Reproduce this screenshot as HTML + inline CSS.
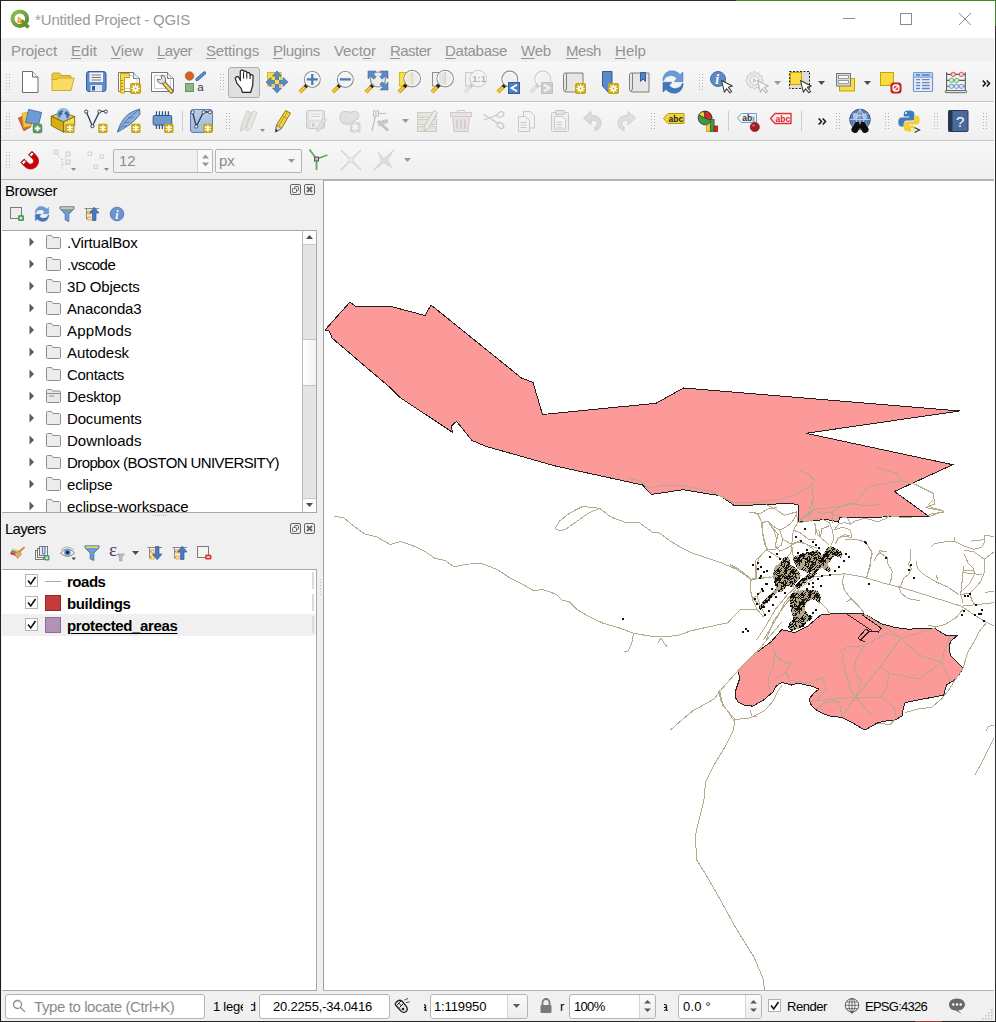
<!DOCTYPE html>
<html lang="en"><head><meta charset="utf-8"><title>*Untitled Project - QGIS</title>
<style>
*{box-sizing:border-box;margin:0;padding:0}
html,body{width:996px;height:1022px;overflow:hidden;background:#f0f0f0}
body{position:relative;font-family:"Liberation Sans",sans-serif;font-size:15px;color:#000}
.a{position:absolute}
.t{position:absolute;white-space:nowrap;line-height:22px;height:22px}
.ic{position:absolute;width:24px;height:24px;overflow:visible}
.ic16{position:absolute;width:16px;height:16px;overflow:visible}
.hl{position:absolute;height:1px;left:1px;right:2px}
.grip{position:absolute;width:5px;height:17px;background-image:linear-gradient(90deg,#b0b0b0 1px,transparent 1px);background-size:3px 3px;-webkit-mask-image:linear-gradient(#000 1px,transparent 1px);-webkit-mask-size:3px 3px;mask-image:linear-gradient(#000 1px,transparent 1px);mask-size:3px 3px}
u{text-decoration-thickness:1px;text-underline-offset:2px}
</style></head>
<body>
<div class="a" style="left:0;top:0;width:996px;height:38px;background:#fff"></div>
<div class="a" style="left:0;top:0;width:736px;height:1px;background:#2b2b2b"></div>
<div class="a" style="left:736px;top:0;width:260px;height:1px;background:#3c8c1c"></div>
<div class="t ttl" style="left:35px;top:9px;color:#999;letter-spacing:-0.141px">*Untitled Project - QGIS</div>
<svg class="a" style="left:9px;top:8px" width="22" height="22" viewBox="0 0 22 22"><defs><linearGradient id="qg" x1="0" y1="0" x2="1" y2="1"><stop offset="0" stop-color="#93c04f"/><stop offset="1" stop-color="#4e8a2c"/></linearGradient></defs><circle cx="10.800" cy="10.700" r="7.300" fill="#fff" stroke="url(#qg)" stroke-width="4"/><path d="M12.500 12.500l7 7" stroke="#5a9632" stroke-width="3.800"/><path d="M9.300 9.200l4.200 3.300l-2 0.300l1.200 2l-1.200 0.700l-1.200-2.100l-1.300 1.300z" fill="#f4d93a" stroke="#ee7913" stroke-width="0.900"/></svg>
<svg class="a" style="left:830px;top:1px" width="165" height="37" viewBox="0 0 165 37" fill="none" stroke="#8a8a8a" stroke-width="1"><path d="M12.5 17.5h12" shape-rendering="crispEdges"/><rect x="70.5" y="12.5" width="11" height="11" shape-rendering="crispEdges"/><path d="M129 12l12 12M141 12l-12 12"/></svg>
<div class="a" style="left:1px;top:38px;width:994px;height:24px;background:#f0f0f0"></div>
<div class="t " style="left:11px;top:40px;color:#939393;letter-spacing:-0.098px">Pro<u>j</u>ect</div>
<div class="t " style="left:71px;top:40px;color:#939393;letter-spacing:0.035px"><u>E</u>dit</div>
<div class="t " style="left:111px;top:40px;color:#939393;letter-spacing:-0.062px"><u>V</u>iew</div>
<div class="t " style="left:157px;top:40px;color:#939393;letter-spacing:-0.506px"><u>L</u>ayer</div>
<div class="t " style="left:206px;top:40px;color:#939393;letter-spacing:-0.15px"><u>S</u>ettings</div>
<div class="t " style="left:273px;top:40px;color:#939393;letter-spacing:-0.315px"><u>P</u>lugins</div>
<div class="t " style="left:334px;top:40px;color:#939393;letter-spacing:-0.089px">Vect<u>o</u>r</div>
<div class="t " style="left:390px;top:40px;color:#939393;letter-spacing:-0.531px"><u>R</u>aster</div>
<div class="t " style="left:445px;top:40px;color:#939393;letter-spacing:-0.277px"><u>D</u>atabase</div>
<div class="t " style="left:521px;top:40px;color:#939393;letter-spacing:-0.193px"><u>W</u>eb</div>
<div class="t " style="left:566px;top:40px;color:#939393;letter-spacing:-0.422px"><u>M</u>esh</div>
<div class="t " style="left:615px;top:40px;color:#939393;letter-spacing:0.035px"><u>H</u>elp</div>
<div class="hl" style="top:62px;background:#fafafa"></div>
<div class="a" style="left:1px;top:63px;width:993px;height:39px;background:linear-gradient(#f7f7f7,#efefef)"></div>
<div class="a" style="left:1px;top:102px;width:993px;height:39px;background:linear-gradient(#f7f7f7,#efefef)"></div>
<div class="a" style="left:1px;top:141px;width:993px;height:39px;background:linear-gradient(#f7f7f7,#efefef)"></div>
<div class="hl" style="top:101px;background:#c3c3c3"></div>
<div class="hl" style="top:102px;background:#fbfbfb"></div>
<div class="hl" style="top:140px;background:#c3c3c3"></div>
<div class="hl" style="top:141px;background:#fbfbfb"></div>
<div class="hl" style="top:179px;background:#b4b4b4"></div>
<div class="a" style="left:994px;top:1px;width:1px;height:1020px;background:#fff"></div>
<div class="a" style="left:995px;top:0;width:1px;height:1022px;background:#2e2e2e"></div>
<div class="a" style="left:995px;top:0;width:1px;height:26px;background:#3c8c1c"></div>
<div class="a" style="left:0;top:0;width:1px;height:1022px;background:#1e1e1e"></div>
<div class="a" style="left:0;top:1021px;width:996px;height:1px;background:#262626"></div>
<div class="a" style="left:915px;top:1021px;width:27px;height:1px;background:#a03c3c"></div>
<div class="a" style="left:323px;top:180px;width:671px;height:811px;background:#fff;border-left:1px solid #a0a0a0;border-top:1px solid #b4b4b4;border-bottom:1px solid #b4b4b4"></div>
<div class="t " style="left:5px;top:180px;letter-spacing:-0.431px">Browser</div>
<svg class="a" style="left:290px;top:184px" width="26" height="11" viewBox="0 0 26 11" fill="none" stroke="#6a6560"><rect x="0.500" y="0.500" width="10" height="10" rx="1.500"/><rect x="4.500" y="2.500" width="4" height="4" rx="0.800"/><rect x="2.500" y="4.500" width="4" height="4" rx="0.800" fill="#f0f0f0"/><rect x="14.500" y="0.500" width="10" height="10" rx="1.500"/><path d="M17 3l5 5M22 3l-5 5" stroke-width="1.800"/></svg>
<div class="a" style="left:2px;top:230px;width:315px;height:283px;background:#fff;border:1px solid #a8a8a8;border-left:none"></div>
<div class="a" style="left:2px;top:231px;width:300px;height:281px;overflow:hidden">
<svg class="a" style="left:27px;top:6px" width="6" height="10" viewBox="0 0 6 10"><path d="M0.5 0.5L5 5L0.5 9.5z" fill="#5a5a5a"/></svg>
<svg class="a" style="left:44px;top:4px" width="15" height="14" viewBox="0 0 15 14"><path d="M0.500 1.500q0-1 1-1h4l1.500 2h6.500q1 0 1 1v9q0 1-1 1h-12q-1 0-1-1z" fill="#ececec" stroke="#8e8e8e"/></svg>
<div class="t " style="left:65px;top:1px;letter-spacing:-0.161px">.VirtualBox</div>
<svg class="a" style="left:27px;top:28px" width="6" height="10" viewBox="0 0 6 10"><path d="M0.5 0.5L5 5L0.5 9.5z" fill="#5a5a5a"/></svg>
<svg class="a" style="left:44px;top:26px" width="15" height="14" viewBox="0 0 15 14"><path d="M0.500 1.500q0-1 1-1h4l1.500 2h6.500q1 0 1 1v9q0 1-1 1h-12q-1 0-1-1z" fill="#ececec" stroke="#8e8e8e"/></svg>
<div class="t " style="left:65px;top:23px;letter-spacing:-0.486px">.vscode</div>
<svg class="a" style="left:27px;top:50px" width="6" height="10" viewBox="0 0 6 10"><path d="M0.5 0.5L5 5L0.5 9.5z" fill="#5a5a5a"/></svg>
<svg class="a" style="left:44px;top:48px" width="15" height="14" viewBox="0 0 15 14"><path d="M0.500 1.500q0-1 1-1h4l1.500 2h6.500q1 0 1 1v9q0 1-1 1h-12q-1 0-1-1z" fill="#ececec" stroke="#8e8e8e"/></svg>
<div class="t " style="left:65px;top:45px;letter-spacing:-0.17px">3D Objects</div>
<svg class="a" style="left:27px;top:72px" width="6" height="10" viewBox="0 0 6 10"><path d="M0.5 0.5L5 5L0.5 9.5z" fill="#5a5a5a"/></svg>
<svg class="a" style="left:44px;top:70px" width="15" height="14" viewBox="0 0 15 14"><path d="M0.500 1.500q0-1 1-1h4l1.500 2h6.500q1 0 1 1v9q0 1-1 1h-12q-1 0-1-1z" fill="#ececec" stroke="#8e8e8e"/></svg>
<div class="t " style="left:65px;top:67px;letter-spacing:-0.156px">Anaconda3</div>
<svg class="a" style="left:27px;top:94px" width="6" height="10" viewBox="0 0 6 10"><path d="M0.5 0.5L5 5L0.5 9.5z" fill="#5a5a5a"/></svg>
<svg class="a" style="left:44px;top:92px" width="15" height="14" viewBox="0 0 15 14"><path d="M0.500 1.500q0-1 1-1h4l1.500 2h6.500q1 0 1 1v9q0 1-1 1h-12q-1 0-1-1z" fill="#ececec" stroke="#8e8e8e"/></svg>
<div class="t " style="left:65px;top:89px;letter-spacing:0.175px">AppMods</div>
<svg class="a" style="left:27px;top:116px" width="6" height="10" viewBox="0 0 6 10"><path d="M0.5 0.5L5 5L0.5 9.5z" fill="#5a5a5a"/></svg>
<svg class="a" style="left:44px;top:114px" width="15" height="14" viewBox="0 0 15 14"><path d="M0.500 1.500q0-1 1-1h4l1.500 2h6.500q1 0 1 1v9q0 1-1 1h-12q-1 0-1-1z" fill="#ececec" stroke="#8e8e8e"/></svg>
<div class="t " style="left:65px;top:111px;letter-spacing:-0.068px">Autodesk</div>
<svg class="a" style="left:27px;top:138px" width="6" height="10" viewBox="0 0 6 10"><path d="M0.5 0.5L5 5L0.5 9.5z" fill="#5a5a5a"/></svg>
<svg class="a" style="left:44px;top:136px" width="15" height="14" viewBox="0 0 15 14"><path d="M0.500 1.500q0-1 1-1h4l1.500 2h6.500q1 0 1 1v9q0 1-1 1h-12q-1 0-1-1z" fill="#ececec" stroke="#8e8e8e"/></svg>
<div class="t " style="left:65px;top:133px;letter-spacing:-0.275px">Contacts</div>
<svg class="a" style="left:27px;top:160px" width="6" height="10" viewBox="0 0 6 10"><path d="M0.5 0.5L5 5L0.5 9.5z" fill="#5a5a5a"/></svg>
<svg class="a" style="left:44px;top:158px" width="15" height="14" viewBox="0 0 15 14"><path d="M0.5 1.5q0-1 1-1h4l1 1.5h7q1 0 1 1v9.500q0 1-1 1h-12q-1 0-1-1z" fill="#e9e9e9" stroke="#8e8e8e"/><path d="M0.5 4.500h14M3 7h5" stroke="#8e8e8e" fill="none"/></svg>
<div class="t " style="left:65px;top:155px;letter-spacing:-0.147px">Desktop</div>
<svg class="a" style="left:27px;top:182px" width="6" height="10" viewBox="0 0 6 10"><path d="M0.5 0.5L5 5L0.5 9.5z" fill="#5a5a5a"/></svg>
<svg class="a" style="left:44px;top:180px" width="15" height="14" viewBox="0 0 15 14"><path d="M0.500 1.500q0-1 1-1h4l1.500 2h6.500q1 0 1 1v9q0 1-1 1h-12q-1 0-1-1z" fill="#ececec" stroke="#8e8e8e"/></svg>
<div class="t " style="left:65px;top:177px;letter-spacing:-0.153px">Documents</div>
<svg class="a" style="left:27px;top:204px" width="6" height="10" viewBox="0 0 6 10"><path d="M0.5 0.5L5 5L0.5 9.5z" fill="#5a5a5a"/></svg>
<svg class="a" style="left:44px;top:202px" width="15" height="14" viewBox="0 0 15 14"><path d="M0.500 1.500q0-1 1-1h4l1.500 2h6.500q1 0 1 1v9q0 1-1 1h-12q-1 0-1-1z" fill="#ececec" stroke="#8e8e8e"/></svg>
<div class="t " style="left:65px;top:199px;letter-spacing:0.031px">Downloads</div>
<svg class="a" style="left:27px;top:226px" width="6" height="10" viewBox="0 0 6 10"><path d="M0.5 0.5L5 5L0.5 9.5z" fill="#5a5a5a"/></svg>
<svg class="a" style="left:44px;top:224px" width="15" height="14" viewBox="0 0 15 14"><path d="M0.500 1.500q0-1 1-1h4l1.500 2h6.500q1 0 1 1v9q0 1-1 1h-12q-1 0-1-1z" fill="#ececec" stroke="#8e8e8e"/></svg>
<div class="t " style="left:65px;top:221px;letter-spacing:-0.597px">Dropbox (BOSTON UNIVERSITY)</div>
<svg class="a" style="left:27px;top:248px" width="6" height="10" viewBox="0 0 6 10"><path d="M0.5 0.5L5 5L0.5 9.5z" fill="#5a5a5a"/></svg>
<svg class="a" style="left:44px;top:246px" width="15" height="14" viewBox="0 0 15 14"><path d="M0.500 1.500q0-1 1-1h4l1.500 2h6.500q1 0 1 1v9q0 1-1 1h-12q-1 0-1-1z" fill="#ececec" stroke="#8e8e8e"/></svg>
<div class="t " style="left:65px;top:243px;letter-spacing:-0.186px">eclipse</div>
<svg class="a" style="left:27px;top:270px" width="6" height="10" viewBox="0 0 6 10"><path d="M0.5 0.5L5 5L0.5 9.5z" fill="#5a5a5a"/></svg>
<svg class="a" style="left:44px;top:268px" width="15" height="14" viewBox="0 0 15 14"><path d="M0.500 1.500q0-1 1-1h4l1.500 2h6.500q1 0 1 1v9q0 1-1 1h-12q-1 0-1-1z" fill="#ececec" stroke="#8e8e8e"/></svg>
<div class="t " style="left:65px;top:265px;letter-spacing:-0.105px">eclipse-workspace</div>
</div>
<div class="a" style="left:302px;top:231px;width:14px;height:281px;background:#e4e4e4;border-left:1px solid #b9b9b9"></div>
<div class="a" style="left:303px;top:231px;width:13px;height:14px;background:#fdfdfd;border-bottom:1px solid #c8c8c8"></div>
<div class="a" style="left:303px;top:498px;width:13px;height:14px;background:#fdfdfd;border-top:1px solid #c8c8c8"></div>
<div class="a" style="left:303px;top:339px;width:13px;height:47px;background:linear-gradient(90deg,#fff,#f4f4f4);border-top:1px solid #c4c4c4;border-bottom:1px solid #c4c4c4"></div>
<svg class="a" style="left:306px;top:235px" width="7" height="4" viewBox="0 0 7 4"><path d="M0 4L3.500 0L7 4z" fill="#4d4d4d"/></svg>
<svg class="a" style="left:306px;top:503px" width="7" height="4" viewBox="0 0 7 4"><path d="M0 0L3.500 4L7 0z" fill="#4d4d4d"/></svg>
<div class="a" style="left:153px;top:515px;width:14px;height:1px;background-image:linear-gradient(90deg,#bdbdbd 1px,transparent 1px);background-size:2px 1px"></div>
<div class="t " style="left:5px;top:518px;letter-spacing:-0.755px">Layers</div>
<svg class="a" style="left:290px;top:523px" width="26" height="11" viewBox="0 0 26 11" fill="none" stroke="#6a6560"><rect x="0.500" y="0.500" width="10" height="10" rx="1.500"/><rect x="4.500" y="2.500" width="4" height="4" rx="0.800"/><rect x="2.500" y="4.500" width="4" height="4" rx="0.800" fill="#f0f0f0"/><rect x="14.500" y="0.500" width="10" height="10" rx="1.500"/><path d="M17 3l5 5M22 3l-5 5" stroke-width="1.800"/></svg>
<div class="a" style="left:2px;top:569px;width:315px;height:422px;background:#fff;border:1px solid #a8a8a8;border-left:none"></div>
<div class="a" style="left:2px;top:614px;width:314px;height:22px;background:#f0f0f0"></div>
<div class="a" style="left:312px;top:572px;width:2px;height:17px;background:#dcdcdc"></div>
<div class="a" style="left:312px;top:594px;width:2px;height:17px;background:#dcdcdc"></div>
<div class="a" style="left:312px;top:616px;width:2px;height:17px;background:#dcdcdc"></div>
<div class="a" style="left:320px;top:579px;width:1px;height:17px;background-image:linear-gradient(#bdbdbd 1px,transparent 1px);background-size:1px 3px"></div>
<div class="a" style="left:25px;top:574px;width:13px;height:13px;background:#fff;border:1px solid #b5b5b5"></div>
<svg class="a" style="left:27px;top:576px" width="10" height="10" viewBox="0 0 10 10"><path d="M1 4.500L3.700 8L8.500 1" fill="none" stroke="#111" stroke-width="1.6"/></svg>
<div class="a" style="left:45px;top:581px;width:16px;height:1px;background:#b7aa8c"></div>
<div class="t " style="left:67px;top:571px;font-weight:bold;letter-spacing:-0.472px">roads</div>
<div class="a" style="left:25px;top:596px;width:13px;height:13px;background:#fff;border:1px solid #b5b5b5"></div>
<svg class="a" style="left:27px;top:598px" width="10" height="10" viewBox="0 0 10 10"><path d="M1 4.500L3.700 8L8.500 1" fill="none" stroke="#111" stroke-width="1.6"/></svg>
<div class="a" style="left:45px;top:595px;width:16px;height:16px;background:#c43c39;border:1px solid #8f2c2a"></div>
<div class="t " style="left:67px;top:593px;font-weight:bold;letter-spacing:-0.352px">buildings</div>
<div class="a" style="left:25px;top:618px;width:13px;height:13px;background:#fff;border:1px solid #b5b5b5"></div>
<svg class="a" style="left:27px;top:620px" width="10" height="10" viewBox="0 0 10 10"><path d="M1 4.500L3.700 8L8.500 1" fill="none" stroke="#111" stroke-width="1.6"/></svg>
<div class="a" style="left:45px;top:617px;width:16px;height:16px;background:#b391b5;border:1px solid #8a6f9c"></div>
<div class="t " style="left:67px;top:615px;font-weight:bold;letter-spacing:-0.36px"><span style="text-decoration:underline;text-decoration-thickness:1px;text-underline-offset:2px">protected_areas</span></div>
<div class="a" style="left:5px;top:994px;width:200px;height:25px;background:#fff;border:1px solid #b4b4b4;border-radius:3px"></div>
<svg class="a" style="left:12px;top:999px" width="14" height="14" viewBox="0 0 14 14" fill="none" stroke="#8e8e8e" stroke-width="1.300"><circle cx="5.500" cy="5.500" r="4"/><path d="M8.500 8.500L13 13"/></svg>
<div class="t " style="left:34px;top:996px;color:#8b8b8b;letter-spacing:-0.402px">Type to locate (Ctrl+K)</div>
<div class="t " style="left:213px;top:996px;font-size:13px;width:30px;overflow:hidden;letter-spacing:-0.236px">1 legend</div>
<div class="t" style="left:251px;top:996px;width:5px;overflow:hidden;direction:rtl;font-size:13px">d</div>
<div class="a" style="left:259px;top:994px;width:131px;height:25px;background:#fff;border:1px solid #b4b4b4;border-radius:3px"></div>
<div class="t " style="left:273px;top:996px;font-size:13px;letter-spacing:-0.184px">20.2255,-34.0416</div>
<div class="t " style="left:424px;top:996px;font-size:13px;width:3px;overflow:hidden;direction:rtl">a</div>
<div class="a" style="left:430px;top:994px;width:98px;height:25px;background:#fff;border:1px solid #b4b4b4;border-radius:3px"></div>
<div class="a" style="left:507px;top:995px;width:20px;height:23px;border-radius:0 3px 3px 0;background:linear-gradient(#fafafa,#ececec);border-left:1px solid #d5d5d5"></div>
<svg class="a" style="left:513px;top:1004px" width="7" height="4" viewBox="0 0 7 4"><path d="M0 0L3.500 4L7 0z" fill="#5a5a5a"/></svg>
<div class="t " style="left:434px;top:996px;font-size:13px;letter-spacing:-0.121px">1:119950</div>
<div class="t " style="left:560px;top:996px;font-size:13px;">r</div>
<div class="a" style="left:569px;top:994px;width:87px;height:25px;background:#fff;border:1px solid #b4b4b4;border-radius:3px"></div><div class="a" style="left:639px;top:995px;width:16px;height:23px;background:linear-gradient(#fafafa,#ececec);border-left:1px solid #d5d5d5;border-radius:0 3px 3px 0"></div><svg class="a" style="left:644px;top:1000px" width="7" height="12" viewBox="0 0 7 12"><path d="M0 3.500L3.500 0L7 3.500z M0 8.500L3.500 12L7 8.500z" fill="#5a5a5a"/></svg>
<div class="t " style="left:574px;top:996px;font-size:13px;letter-spacing:-0.688px">100%</div>
<div class="t " style="left:664px;top:996px;font-size:13px;width:4px;overflow:hidden;direction:rtl">a</div>
<div class="a" style="left:678px;top:994px;width:84px;height:25px;background:#fff;border:1px solid #b4b4b4;border-radius:3px"></div><div class="a" style="left:745px;top:995px;width:16px;height:23px;background:linear-gradient(#fafafa,#ececec);border-left:1px solid #d5d5d5;border-radius:0 3px 3px 0"></div><svg class="a" style="left:750px;top:1000px" width="7" height="12" viewBox="0 0 7 12"><path d="M0 3.500L3.500 0L7 3.500z M0 8.500L3.500 12L7 8.500z" fill="#5a5a5a"/></svg>
<div class="t " style="left:683px;top:996px;font-size:13px;letter-spacing:0.222px">0.0 °</div>
<div class="a" style="left:768px;top:999px;width:13px;height:13px;background:#fff;border:1px solid #b0b0b0"></div>
<svg class="a" style="left:770px;top:1001px" width="10" height="10" viewBox="0 0 10 10"><path d="M1 4.500L3.700 8L8.500 1" fill="none" stroke="#111" stroke-width="1.600"/></svg>
<div class="t " style="left:787px;top:996px;font-size:13px;letter-spacing:-0.44px">Render</div>
<div class="t " style="left:865px;top:996px;font-size:13px;letter-spacing:-0.74px">EPSG:4326</div>
<svg class="a" style="left:982px;top:1008px" width="12" height="12" viewBox="0 0 12 12" fill="#bdbdbd"><rect x="9" y="1" width="1.500" height="1.500"/><rect x="6" y="4" width="1.500" height="1.500"/><rect x="9" y="4" width="1.500" height="1.500"/><rect x="3" y="7" width="1.500" height="1.500"/><rect x="6" y="7" width="1.500" height="1.500"/><rect x="9" y="7" width="1.500" height="1.500"/><rect x="0" y="10" width="1.500" height="1.500"/><rect x="3" y="10" width="1.500" height="1.500"/><rect x="6" y="10" width="1.500" height="1.500"/><rect x="9" y="10" width="1.500" height="1.500"/></svg>
<svg class="a" style="left:324px;top:181px" width="670" height="809" viewBox="0 0 670 809" shape-rendering="crispEdges">
<defs><pattern id="ct" width="24" height="24" patternUnits="userSpaceOnUse"><rect width="24" height="24" fill="#b3a88b"/><path d="M0 0h2v1h-2zM4 0h1v1h-1zM6 0h3v1h-3zM10 0h1v1h-1zM13 0h1v1h-1zM15 0h2v1h-2zM19 0h1v1h-1zM2 1h3v1h-3zM6 1h1v1h-1zM8 1h2v1h-2zM12 1h1v1h-1zM15 1h2v1h-2zM3 2h1v1h-1zM5 2h4v1h-4zM11 2h1v1h-1zM13 2h3v1h-3zM23 2h1v1h-1zM1 3h1v1h-1zM4 3h4v1h-4zM10 3h1v1h-1zM22 3h1v1h-1zM0 4h1v1h-1zM5 4h2v1h-2zM8 4h3v1h-3zM12 4h3v1h-3zM16 4h2v1h-2zM21 4h2v1h-2zM1 5h1v1h-1zM4 5h4v1h-4zM11 5h3v1h-3zM15 5h2v1h-2zM18 5h1v1h-1zM20 5h4v1h-4zM0 6h1v1h-1zM4 6h3v1h-3zM10 6h6v1h-6zM19 6h1v1h-1zM21 6h3v1h-3zM3 7h1v1h-1zM5 7h2v1h-2zM10 7h5v1h-5zM18 7h1v1h-1zM20 7h1v1h-1zM23 7h1v1h-1zM4 8h3v1h-3zM9 8h2v1h-2zM12 8h6v1h-6zM19 8h1v1h-1zM21 8h3v1h-3zM1 9h2v1h-2zM4 9h1v1h-1zM8 9h1v1h-1zM10 9h1v1h-1zM13 9h1v1h-1zM15 9h1v1h-1zM18 9h1v1h-1zM20 9h1v1h-1zM0 10h2v1h-2zM3 10h1v1h-1zM5 10h1v1h-1zM8 10h2v1h-2zM12 10h1v1h-1zM15 10h1v1h-1zM21 10h3v1h-3zM0 11h1v1h-1zM2 11h3v1h-3zM6 11h7v1h-7zM14 11h2v1h-2zM22 11h2v1h-2zM2 12h1v1h-1zM4 12h4v1h-4zM9 12h2v1h-2zM13 12h1v1h-1zM15 12h2v1h-2zM19 12h1v1h-1zM21 12h3v1h-3zM0 13h2v1h-2zM4 13h6v1h-6zM11 13h3v1h-3zM16 13h1v1h-1zM19 13h5v1h-5zM0 14h1v1h-1zM7 14h2v1h-2zM10 14h2v1h-2zM14 14h1v1h-1zM19 14h5v1h-5zM0 15h1v1h-1zM4 15h2v1h-2zM9 15h1v1h-1zM14 15h2v1h-2zM19 15h5v1h-5zM3 16h1v1h-1zM5 16h1v1h-1zM7 16h1v1h-1zM10 16h3v1h-3zM14 16h1v1h-1zM16 16h1v1h-1zM18 16h3v1h-3zM23 16h1v1h-1zM0 17h4v1h-4zM5 17h2v1h-2zM9 17h4v1h-4zM14 17h6v1h-6zM22 17h2v1h-2zM1 18h3v1h-3zM5 18h2v1h-2zM10 18h1v1h-1zM12 18h2v1h-2zM17 18h3v1h-3zM21 18h1v1h-1zM3 19h3v1h-3zM9 19h1v1h-1zM12 19h1v1h-1zM14 19h8v1h-8zM1 20h1v1h-1zM3 20h6v1h-6zM11 20h1v1h-1zM15 20h7v1h-7zM1 21h3v1h-3zM5 21h1v1h-1zM7 21h5v1h-5zM14 21h1v1h-1zM16 21h2v1h-2zM19 21h1v1h-1zM21 21h1v1h-1zM1 22h1v1h-1zM4 22h1v1h-1zM8 22h2v1h-2zM11 22h1v1h-1zM15 22h1v1h-1zM18 22h2v1h-2zM1 23h2v1h-2zM4 23h1v1h-1zM7 23h5v1h-5zM17 23h1v1h-1zM19 23h1v1h-1z" fill="#151310"/></pattern></defs>
<polygon points="1.0,149.0 26.0,121.0 31.0,125.0 69.0,126.0 101.0,134.5 107.0,124.0 197.5,197.0 209.0,201.5 218.5,233.5 332.0,222.3 359.6,207.0 635.5,230.0 482.0,252.3 628.7,283.7 570.5,310.5 605.5,335.8 516.0,336.2 514.4,341.0 502.0,338.4 475.0,341.0 474.0,324.1 468.0,322.3 410.7,324.8 396.4,314.8 359.0,308.7 330.3,313.0 327.0,313.3 318.5,304.0 231.5,285.0 161.5,265.2 148.0,259.4 132.5,240.3 127.4,245.0 128.4,251.2 76.2,216.7 66.0,206.5 8.0,157.0 5.5,150.2" fill="#fb9a99" stroke="#232323" stroke-width="1"/>
<polygon points="497.8,433.2 538.0,432.3 546.0,436.0 557.3,442.7 571.0,446.5 584.0,448.1 610.8,447.4 622.7,454.8 633.1,454.6 627.0,460.0 625.6,463.5 625.5,470.0 627.1,475.4 633.0,481.0 639.0,487.3 635.0,494.0 630.1,499.2 622.7,503.7 621.0,509.0 619.7,514.1 581.1,521.5 579.0,529.0 578.1,534.9 570.7,539.3 562.0,540.0 554.3,541.5 540.9,549.1 528.0,541.5 517.2,536.3 508.0,535.5 500.8,533.4 493.0,529.5 487.4,524.5 485.5,520.0 485.9,517.0 490.0,512.0 494.9,508.1 487.4,505.1 474.1,502.2 467.5,504.0 458.2,501.6 456.2,502.2 452.3,505.0 448.8,511.1 439.4,519.2 428.8,525.1 420.6,524.5 414.0,521.0 411.7,517.0 411.2,511.0 415.9,496.9 413.5,489.9 414.0,488.8 430.0,473.4 447.3,460.6 457.7,448.7 471.1,451.6 483.0,445.7" fill="#fb9a99" stroke="#232323" stroke-width="1"/>
<polyline points="523.1,433.2 549.8,451.0" fill="none" stroke="#232323" stroke-width="1"/>
<polyline points="538.0,433.8 557.3,447.2 554.3,451.0 545.4,450.2 536.5,459.0 540.9,460.6" fill="none" stroke="#232323" stroke-width="1"/>
<polyline points="545.4,450.2 542.0,448.0 534.0,457.0 536.5,459.0" fill="none" stroke="#232323" stroke-width="1"/>
<g fill="none" stroke="#b7aa8c" stroke-width="1">
<polyline points="10.2,335.2 19.6,336.7 30.2,345.4 40.8,353.0 52.9,356.0 66.1,363.5 76.6,360.5 90.6,365.4 101.9,371.1 111.4,377.5 120.8,379.4 130.2,385.8 143.4,383.2 156.7,382.0 173.6,388.8 185.0,396.4 196.3,402.0 209.5,409.6 219.0,408.5 232.2,413.4 237.8,419.0 245.4,420.9 252.9,428.5 264.3,435.3 279.4,442.4 294.5,446.6 309.6,452.3 324.7,454.9 339.8,456.0 354.9,454.1 366.5,449.9 387.7,445.2 404.1,441.7 411.2,433.5 417.0,428.3 433.5,428.8"/>
<polyline points="309.6,452.3 307.7,462.4 303.9,470.0 300.1,470.8"/>
<polyline points="337.1,456.8 334.1,461.7"/>
<polyline points="337.1,456.8 341.6,464.3 343.5,466.2"/>
<polyline points="231.0,347.3 235.9,339.8 245.4,332.2 258.6,325.4 275.6,327.3 286.9,336.0 302.0,341.6 315.2,341.6 328.4,351.1 336.0,352.2 345.4,359.5 357.1,366.6 368.9,372.4 383.0,377.1 397.1,381.8 411.2,387.7 420.6,393.6 426.4,398.3 434.7,397.1 446.4,395.9"/>
<polyline points="231.0,347.3 235.9,350.0 241.6,348.4 251.0,341.6 264.3,332.2 275.6,327.3"/>
<polyline points="395.5,509.0 398.9,524.6 411.1,538.5 409.4,549.0 400.7,566.3 390.3,583.7 381.6,601.0 379.8,620.1 374.6,641.0 371.2,654.9 372.9,679.2 381.6,693.1 395.5,717.4 412.8,748.7 430.2,776.5 438.9,797.3 440.6,809.0"/>
<polyline points="411.1,538.5 426.7,536.8 440.6,529.8 448.8,520.4 453.5,511.0 458.2,504.0"/>
<polyline points="426.0,529.0 428.0,535.0 433.0,535.0"/>
<polyline points="458.2,440.5 446.4,454.6 434.7,468.7 415.9,487.5 397.1,508.7 390.0,518.1 368.9,529.8 354.8,541.6 346.6,549.0"/>
<polyline points="394.7,509.8 397.1,520.4 406.5,534.5 411.2,541.6"/>
<polyline points="650.8,594.1 659.4,578.5 668.1,561.1 670.0,557.0"/>
<polyline points="662.0,550.0 664.5,545.5 670.0,544.0"/>
<polyline points="581.3,531.6 593.5,528.1 607.3,526.4 617.8,517.7 624.7,509.0 631.0,499.0 639.0,487.0"/>
<polyline points="553.5,542.0 565.7,543.7 570.9,538.5"/>
<polyline points="426.4,398.3 426.4,407.7 428.8,419.4 433.5,428.8 439.4,435.8"/>
<polyline points="425.3,331.3 433.5,332.5 437.0,339.5 439.4,356.0 442.9,367.7 434.7,377.1 432.3,386.5 431.1,398.3"/>
<polyline points="432.3,459.3 441.7,445.2 451.1,428.8 463.2,414.0 476.8,401.0 490.3,395.8 503.9,394.3 520.5,392.8 538.5,395.8 563.4,403.2 575.7,406.0 604.5,414.9 637.4,425.2 651.1,423.8 670.0,421.7"/>
<polyline points="439.4,459.3 446.4,447.6 453.5,435.8 460.5,421.7 472.3,407.9 478.3,400.3"/>
<polyline points="442.1,459.0 449.7,439.5 463.2,421.4 476.8,406.3 490.3,397.3"/>
<polyline points="446.4,459.3 451.1,473.4 448.8,487.5 444.1,496.9 445.2,508.7"/>
<polyline points="451.1,473.4 458.2,480.5 466.4,482.8 460.5,492.2 451.1,496.9"/>
<polyline points="438.4,341.6 443.7,340.1 448.2,344.6 455.7,349.1 458.7,358.2 457.2,364.2 451.2,368.7 442.1,368.7 431.6,379.2 432.4,397.3"/>
<polyline points="442.1,323.5 451.2,328.0 460.2,334.1 466.2,332.6 472.3,331.0 473.8,341.6 469.3,349.1 467.7,364.2 469.3,376.2"/>
<polyline points="448.2,346.1 454.2,353.6 451.2,364.2 455.7,370.2 463.2,367.2 467.7,364.2 475.3,359.7 484.3,364.2 493.3,367.2"/>
<polyline points="475.3,341.6 484.3,340.1 496.4,337.1 505.4,341.6 508.4,349.1 509.9,358.2 506.9,364.2"/>
<polyline points="490.3,341.6 493.3,353.6 496.4,356.7 497.9,347.6 502.4,346.1 505.4,344.6"/>
<polyline points="509.9,349.1 519.0,346.1 526.5,349.1 528.0,356.7 520.5,355.1 514.4,356.7 511.4,362.7"/>
<polyline points="515.9,335.6 523.5,337.1 526.5,343.1 531.0,340.1 541.5,337.1 553.8,340.9 562.0,337.5 564.8,334.8 581.2,336.8 588.1,336.8"/>
<polyline points="520.5,358.2 531.0,358.2 541.5,361.2 547.6,370.2 546.1,385.3 543.0,395.8"/>
<polyline points="520.5,392.8 518.2,400.3 520.5,409.4 526.5,416.9 534.0,424.4 540.1,432.0"/>
<polyline points="522.0,421.0 526.5,418.4"/>
<polyline points="496.4,421.4 502.4,427.4 505.4,432.0"/>
<polyline points="406.0,383.8 415.0,388.3 422.6,394.3 427.1,398.8 431.6,398.1 449.7,395.8"/>
<polyline points="427.1,398.8 426.3,409.4 428.6,416.9 436.1,424.4"/>
<polyline points="487.3,319.0 490.3,328.0 496.4,332.6 508.4,331.0 517.4,325.0 526.5,322.0 541.5,325.0 556.0,323.5"/>
<polyline points="508.4,331.0 508.4,341.6"/>
<polyline points="475.3,338.6 484.3,334.1 490.3,328.0"/>
<polyline points="304.9,297.0 316.8,300.4 323.6,307.2 341.0,304.1 362.5,305.2 387.5,310.5 408.9,321.2 433.9,321.2 459.0,317.7 469.7,314.1 484.0,306.9 491.1,299.8 484.0,292.6 475.0,289.8"/>
<polyline points="487.6,303.4 489.3,317.7 484.0,331.9 487.6,340.9"/>
<polyline points="551.9,286.2 573.3,292.6 576.9,299.8 544.7,305.2 537.6,314.1 530.4,323.0 509.0,326.6 487.6,328.4"/>
<polyline points="576.9,299.8 591.2,303.4 609.1,312.3 610.8,323.0 601.9,326.6 619.8,330.2 605.5,335.5"/>
<polyline points="606.5,366.3 610.0,362.8 620.9,360.8 630.5,360.1 640.1,364.9 649.7,368.3 657.9,366.3 660.7,360.1 660.7,354.6 670.0,355.3"/>
<polyline points="630.5,360.1 630.0,356.0"/>
<polyline points="640.1,369.0 649.7,371.0 660.0,377.9 660.7,390.2 656.5,401.2 645.6,412.2 637.4,413.5"/>
<polyline points="592.2,380.0 593.5,387.5 599.0,393.0 612.7,401.2 623.7,406.0 634.6,413.5"/>
<polyline points="612.0,394.0 614.0,399.0"/>
<polyline points="640.1,373.1 644.2,382.0 649.7,387.5 650.4,393.0 645.6,402.6 638.7,409.4"/>
<polyline points="639.4,384.8 638.7,395.7 637.4,406.7 636.7,413.5 639.0,422.0"/>
<polyline points="639.4,388.9 650.4,390.2"/>
<polyline points="639.4,391.6 657.9,393.7"/>
<polyline points="637.4,425.2 648.3,432.7 659.3,439.5 670.0,445.0"/>
<polyline points="638.7,428.6 631.9,436.8 620.9,443.7 611.3,445.7 604.5,444.3"/>
<polyline points="662.0,442.3 655.2,450.5 651.1,459.0 644.0,471.0 639.0,487.0"/>
<polyline points="536.0,358.7 542.8,362.8 548.3,372.4 545.6,384.8 542.8,395.7"/>
<polyline points="549.7,380.6 552.4,375.2 555.9,371.7 555.9,369.7 562.7,371.0"/>
<polyline points="555.9,371.7 563.4,376.5 564.1,383.4 568.2,390.2 567.5,397.1 565.5,403.2"/>
<polyline points="586.7,368.3 586.7,377.9 584.6,383.4 587.4,387.5 585.3,393.0 579.8,397.1 577.1,403.9 575.0,406.7 577.1,412.2 583.9,417.6 595.6,419.7"/>
<polyline points="608.6,319.0 604.5,323.8 607.2,326.5 618.2,329.3 619.6,331.3 607.2,332.7 604.5,334.8"/>
<polyline points="647.0,360.1 655.2,359.4 660.7,358.0"/>
<polyline points="660.7,377.9 670.0,371.0"/>
<polyline points="661.3,411.5 670.0,410.1"/>
<polyline points="645.6,412.2 648.3,420.4 651.1,423.8"/>
<polyline points="438.4,341.6 438.4,352.1 440.6,362.7 443.7,368.7"/>
<polyline points="443.7,340.1 449.7,349.1 452.7,358.2 451.2,367.2"/>
<polyline points="455.7,349.1 461.7,346.1 467.7,341.6 472.3,334.1"/>
<polyline points="458.7,358.2 466.2,362.7 473.8,361.2 481.3,362.7 490.3,368.7"/>
<polyline points="467.7,364.2 467.0,371.7 463.2,376.2"/>
<polyline points="442.1,368.7 454.2,376.2 458.7,378.5"/>
<polyline points="431.6,379.2 436.1,374.7 442.1,368.7"/>
<polyline points="469.3,349.1 476.8,352.1 484.3,358.2 491.8,358.2"/>
<polyline points="491.8,343.1 491.8,353.6"/>
<polyline points="494.9,349.1 496.4,356.7 502.4,361.2 505.4,364.2"/>
<polyline points="511.4,347.6 514.4,343.1 520.5,341.6 526.5,343.1"/>
<polyline points="514.4,356.7 520.5,353.6 526.5,355.1"/>
<polyline points="505.4,331.0 511.4,334.1 517.4,335.6"/>
<polyline points="475.3,341.6 476.8,338.6 481.3,334.1 490.3,328.0"/>
<polyline points="425.6,331.0 436.1,332.6 443.7,328.0 452.7,326.5"/>
<polyline points="433.1,415.4 436.1,424.4 440.6,433.5"/>
<polyline points="428.6,416.9 433.1,415.4 437.6,409.4"/>
<polyline points="540.1,432.9 576.1,456.4 595.5,474.4 617.7,481.3 626.0,499.4"/>
<polyline points="612.1,446.7 576.1,457.8 556.7,485.5 531.8,516.0 517.9,535.4"/>
<polyline points="540.1,464.7 562.3,452.3 576.1,456.4"/>
<polyline points="515.1,470.3 523.5,466.1 540.1,464.7 531.8,480.0 530.4,491.0 537.3,499.4 531.8,516.0"/>
<polyline points="556.7,485.5 565.0,492.4 595.5,498.0 612.1,485.5 617.7,481.3"/>
<polyline points="565.0,492.4 562.3,507.7 556.7,516.0 570.6,527.1 571.9,535.4"/>
<polyline points="517.9,471.6 520.7,488.3 526.2,507.7 531.8,516.0 548.4,535.4"/>
<polyline points="487.4,520.1 504.1,518.8 531.8,516.0 556.7,516.0"/>
<polyline points="491.6,528.4 501.3,521.5 515.1,520.1 517.9,535.4"/>
<polyline points="462.5,491.0 465.3,499.4 484.7,502.1 498.5,496.6 502.7,507.7 493.0,518.8"/>
<polyline points="617.7,481.3 620.4,468.9 626.0,455.0"/>
</g>
<polygon points="449.7,389.8 451.2,385.3 455.7,382.3 458.7,378.5 462.5,377.0 465.5,379.2 466.2,383.8 470.8,386.0 474.5,389.8 476.8,394.3 476.0,397.3 472.3,401.1 469.3,406.3 466.2,405.6 463.2,404.8 458.7,409.4 457.2,411.6 453.4,408.6 451.2,404.8 449.7,398.8 448.9,394.3" fill="url(#ct)"/>
<polygon points="468.5,377.0 472.3,374.7 478.3,372.5 484.3,371.0 488.8,370.2 493.3,368.7 496.4,371.7 498.6,375.5 500.9,379.2 503.9,383.8 506.9,388.3 506.2,391.3 502.4,389.8 497.9,386.8 493.3,389.8 490.3,392.8 487.3,391.3 482.8,392.0 479.8,389.8 476.8,389.0 473.8,388.3 472.3,385.3 470.0,381.5" fill="url(#ct)"/>
<polygon points="494.9,377.7 499.4,373.2 503.1,367.2 506.9,364.9 511.4,367.2 516.7,370.2 519.0,373.2 516.7,377.0 511.4,374.7 508.4,377.0 503.9,383.0 500.1,387.5 496.4,383.8" fill="url(#ct)"/>
<polygon points="466.2,415.4 468.5,411.6 476.8,409.4 484.3,409.4 490.3,408.6 494.9,410.9 497.1,416.9 495.6,422.9 491.8,419.2 488.1,418.4 482.8,421.4 480.5,425.2 481.3,429.7 484.3,433.5 488.8,435.0 487.3,438.7 482.8,441.0 479.8,445.5 472.3,448.5 467.7,450.0 464.0,446.3 465.5,441.7 469.3,438.0 467.7,432.0 466.2,424.4" fill="url(#ct)"/>
<polygon points="434.6,426.7 438.4,421.4 443.7,415.4 449.7,409.4 452.7,406.3 455.7,407.9 451.2,413.1 445.2,419.2 439.9,425.2 436.9,428.9" fill="url(#ct)"/>
<polygon points="470.8,404.8 476.8,398.8 484.3,392.8 490.3,391.3 493.3,392.8 487.3,397.3 481.3,401.8 475.3,407.1 472.3,407.9" fill="url(#ct)"/>
<polygon points="458.7,378.5 461.0,375.5 464.7,376.2 466.2,379.2 464.0,381.5 460.2,380.7" fill="url(#ct)"/>
<g fill="#111">
<rect x="433" y="381" width="2" height="1.5"/>
<rect x="436" y="385" width="2" height="1.5"/>
<rect x="439" y="390" width="2" height="1.5"/>
<rect x="435" y="396" width="2" height="1.5"/>
<rect x="441" y="402" width="2" height="1.5"/>
<rect x="437" y="407" width="2" height="1.5"/>
<rect x="433" y="412" width="2" height="1.5"/>
<rect x="444" y="418" width="2" height="1.5"/>
<rect x="448" y="423" width="2" height="1.5"/>
<rect x="439" y="425" width="2" height="1.5"/>
<rect x="442" y="420" width="2" height="1.5"/>
<rect x="451" y="415" width="2" height="1.5"/>
<rect x="454" y="409" width="2" height="1.5"/>
<rect x="447" y="407" width="2" height="1.5"/>
<rect x="491" y="363" width="2" height="1.5"/>
<rect x="494" y="366" width="2" height="1.5"/>
<rect x="482" y="368" width="2" height="1.5"/>
<rect x="473" y="371" width="2" height="1.5"/>
<rect x="497" y="394" width="2" height="1.5"/>
<rect x="493" y="397" width="2" height="1.5"/>
<rect x="488" y="405" width="2" height="1.5"/>
<rect x="482" y="407" width="2" height="1.5"/>
<rect x="496" y="404" width="2" height="1.5"/>
<rect x="445" y="375" width="2" height="1.5"/>
<rect x="452" y="372" width="2" height="1.5"/>
<rect x="521" y="372" width="2" height="1.5"/>
<rect x="524" y="375" width="2" height="1.5"/>
<rect x="541" y="361" width="2" height="1.5"/>
<rect x="561" y="376" width="2" height="1.5"/>
<rect x="584" y="388" width="2" height="1.5"/>
<rect x="586" y="383" width="2" height="1.5"/>
<rect x="589" y="396" width="2" height="1.5"/>
<rect x="640" y="414" width="2" height="1.5"/>
<rect x="643" y="414" width="2" height="1.5"/>
<rect x="645" y="412" width="2" height="1.5"/>
<rect x="651" y="423" width="2" height="1.5"/>
<rect x="639" y="429" width="2" height="1.5"/>
<rect x="637" y="433" width="2" height="1.5"/>
<rect x="650" y="433" width="2" height="1.5"/>
<rect x="654" y="432" width="2" height="1.5"/>
<rect x="656" y="432" width="2" height="1.5"/>
<rect x="657" y="428" width="2" height="1.5"/>
<rect x="659" y="439" width="2" height="1.5"/>
<rect x="298" y="437" width="2" height="1.5"/>
<rect x="428" y="383" width="2" height="1.5"/>
<rect x="433" y="387" width="2" height="1.5"/>
<rect x="436" y="394" width="2" height="1.5"/>
<rect x="430" y="417" width="2" height="1.5"/>
<rect x="432" y="422" width="2" height="1.5"/>
<rect x="438" y="409" width="2" height="1.5"/>
<rect x="442" y="402" width="2" height="1.5"/>
<rect x="446" y="415" width="2" height="1.5"/>
<rect x="444" y="429" width="2" height="1.5"/>
<rect x="440" y="433" width="2" height="1.5"/>
<rect x="421" y="447" width="2" height="1.5"/>
<rect x="418" y="450" width="2" height="1.5"/>
<rect x="423" y="449" width="2" height="1.5"/>
<rect x="471" y="355" width="2" height="1.5"/>
<rect x="476" y="359" width="2" height="1.5"/>
<rect x="488" y="360" width="2" height="1.5"/>
<rect x="480" y="347" width="2" height="1.5"/>
<rect x="455" y="377" width="2" height="1.5"/>
<rect x="442" y="389" width="2" height="1.5"/>
<rect x="460" y="411" width="2" height="1.5"/>
<rect x="466" y="415" width="2" height="1.5"/>
<rect x="484" y="402" width="2" height="1.5"/>
<rect x="488" y="401" width="2" height="1.5"/>
<rect x="481" y="397" width="2" height="1.5"/>
<rect x="505" y="393" width="2" height="1.5"/>
<rect x="510" y="389" width="2" height="1.5"/>
<rect x="514" y="385" width="2" height="1.5"/>
<rect x="519" y="379" width="2" height="1.5"/>
<rect x="488" y="431" width="2" height="1.5"/>
<rect x="491" y="428" width="2" height="1.5"/>
<rect x="544" y="402" width="2" height="1.5"/>
<rect x="540" y="360" width="2" height="1.5"/>
</g>
<rect x="591" y="431" width="26" height="1.6" fill="#c43c3c" opacity="0"/>
</svg>
<div class="grip" style="left:6px;top:74px"></div>
<svg class="ic" style="left:18px;top:70px" viewBox="0 0 24 24"><path d="M4.500 1.500h10l5.500 5.500v15.500h-15.500z" fill="#fff" stroke="#6d6d6d"/><path d="M14.500 1.500v5.500h5.500" fill="#f2f2f2" stroke="#6d6d6d"/></svg>
<svg class="ic" style="left:51px;top:70px" viewBox="0 0 24 24"><path d="M1 4.500q0-1.500 1.500-1.500h6l2 2.500h8q1.500 0 1.500 1.500v3h-19z" fill="#e9c63a" stroke="#c9a21c"/><path d="M1 20.500v-11h5l1.500-1.500h15.500l-3 12.500z" fill="#f8dd62" stroke="#d0a92a"/></svg>
<svg class="ic" style="left:84px;top:70px" viewBox="0 0 24 24"><rect x="2.500" y="1.500" width="19.500" height="20" rx="2.500" fill="#5e8ccc" stroke="#345f9c"/><rect x="5.500" y="2.500" width="13.500" height="9.500" fill="#f4f4f4"/><path d="M7.500 5h9.500M7.500 7.500h9.500M7.500 10h9.500" stroke="#777" stroke-width="1"/><rect x="6.500" y="15" width="11.500" height="6.500" fill="#dfe6f0"/><rect x="8" y="16" width="3" height="4.500" fill="#345f9c"/></svg>
<svg class="ic" style="left:117px;top:70px" viewBox="0 0 24 24"><path d="M1.500 2.500h15l6 6v13h-21z" fill="#fff" stroke="#777"/><path d="M16.500 2.500v6h6" fill="#f4f4f4" stroke="#777"/><rect x="4.500" y="5.500" width="15.500" height="13" fill="none" stroke="#bccdec"/><path d="M3.500 3.500h9v4h-5v15.500h-4z" fill="#f6d84c" stroke="#c9a21c"/><path d="M4 10.500h2M4 13.500h2M4 16.500h2M4 19.500h2" stroke="#b8900f"/><rect x="13" y="13" width="11" height="11" rx="1.800" fill="#c9a70e"/><path d="M18.500 14.300v8.400M14.300 18.500h8.400M15.500 15.500l6 6M21.500 15.500l-6 6" stroke="#fff" stroke-width="1.300" fill="none"/><circle cx="18.500" cy="18.500" r="2.300" fill="#fff"/><circle cx="18.500" cy="18.500" r="1" fill="#c9a70e"/></svg>
<svg class="ic" style="left:150px;top:70px" viewBox="0 0 24 24"><path d="M1.500 2.500h16l6 6v13h-22z" fill="#fff" stroke="#777"/><path d="M17.500 2.500v6h6" fill="#f4f4f4" stroke="#777"/><rect x="4.500" y="5.500" width="16" height="13" fill="none" stroke="#bccdec"/><path d="M14 13l7.500 8.500" stroke="#6b5a2a" stroke-width="4.200" stroke-linecap="round"/><path d="M14 13l7.300 8.300" stroke="#ecd06a" stroke-width="2.600" stroke-linecap="round"/><path d="M11.130 5.320A4.200 4.200 0 1 1 7.320 9.130L10 9.800L11.700 8.100z" fill="#e0e0e0" stroke="#6a6a6a" stroke-width="1"/></svg>
<svg class="ic" style="left:183px;top:70px" viewBox="0 0 24 24"><circle cx="6.500" cy="6" r="4.300" fill="#d2622a" stroke="#b5501f" stroke-width="0.600"/><rect x="2.500" y="13.500" width="8" height="8" fill="#8cb78c" stroke="#5e9a5e"/><path d="M14 9.500l7.500-6.500" stroke="#2e5f9f" stroke-width="3.200" stroke-linecap="round"/><path d="M14 9.500l7.500-6.500" stroke="#5b8fd0" stroke-width="1.800" stroke-linecap="round"/><text x="14.300" y="21" font-family="Liberation Sans,sans-serif" font-size="11.500" fill="#3a3a3a">a</text></svg>
<div class="grip" style="left:220px;top:74px"></div>
<div class="a" style="left:228px;top:67px;width:32px;height:31px;background:#e0e0e0;border:1px solid #adadad;border-radius:3px"></div>
<svg class="ic" style="left:232px;top:70px" viewBox="0 0 24 24"><path d="M3.220 8.190L4.840 13.070L9.180 18.490L10.440 22.470L18.580 22.470L20.740 15.240L21.110 5.840L20.560 4.940L19.300 4.470L18.140 5.300L17.670 3.130L16.410 2.590L14.960 2.770L14.600 1.510L13.340 0.960L12.070 1.510L11.780 0.780L10.810 0.130L9.180 0.130L8.280 1.320L8.280 9.460L8.460 10.540L6.470 6.930L4.840 6.490z" fill="#fff" stroke="#222" stroke-width="1.200" stroke-linejoin="round"/><path d="M11.530 2.230L11.530 8.550M14.780 3.310L14.780 8.550M18.030 5.480L18.030 8.910" stroke="#222" stroke-width="1.100" fill="none"/></svg>
<svg class="ic" style="left:265px;top:70px" viewBox="0 0 24 24"><rect x="2.500" y="2.500" width="13.500" height="13.500" fill="#f7dc45" stroke="#d8b820"/><path d="M12 1l4.500 5h-3v4.500h4.500v-3l5 4.500l-5 4.500v-3h-4.500v4.500h3l-4.500 5l-4.500-5h3v-4.500h-4.500v3l-5-4.500l5-4.500v3h4.500v-4.500h-3z" fill="#5b8ac6" stroke="#3f6ea8" stroke-width="0.700"/><rect x="10" y="10" width="4" height="4" fill="#f7dc45"/></svg>
<svg class="ic" style="left:298px;top:70px" viewBox="0 0 24 24"><g opacity="1"><path d="M1.800 22.200L8.500 15.500" stroke="#b8901a" stroke-width="3.800"/><path d="M1.600 22.400L8.500 15.500" stroke="#f5c832" stroke-width="2.400"/><path d="M7 17L9.300 14.700" stroke="#222" stroke-width="3.600"/><circle cx="14.3" cy="9.4" r="7.9" fill="#f2f2f2" stroke="#8e8e8e" stroke-width="1.200"/><circle cx="14.3" cy="9.4" r="6.8" fill="none" stroke="#fff" stroke-width="1"/></g><path d="M8.800 9.400h11M14.300 3.900v11" stroke="#4a7ab5" stroke-width="2.300"/></svg>
<svg class="ic" style="left:331px;top:70px" viewBox="0 0 24 24"><g opacity="1"><path d="M1.800 22.200L8.500 15.500" stroke="#b8901a" stroke-width="3.800"/><path d="M1.600 22.400L8.500 15.500" stroke="#f5c832" stroke-width="2.400"/><path d="M7 17L9.300 14.700" stroke="#222" stroke-width="3.600"/><circle cx="14.3" cy="9.4" r="7.9" fill="#f2f2f2" stroke="#8e8e8e" stroke-width="1.200"/><circle cx="14.3" cy="9.4" r="6.8" fill="none" stroke="#fff" stroke-width="1"/></g><path d="M8.800 9.400h11" stroke="#4a7ab5" stroke-width="2.300"/></svg>
<svg class="ic" style="left:364px;top:70px" viewBox="0 0 24 24"><path d="M1.800 22.200L8.500 15.500" stroke="#b8901a" stroke-width="3.800"/><path d="M1.600 22.400L8.500 15.500" stroke="#f5c832" stroke-width="2.400"/><path d="M7 17L9.300 14.700" stroke="#222" stroke-width="3.600"/><circle cx="14" cy="9.500" r="7.500" fill="#ededed" stroke="#8e8e8e" stroke-width="1.200"/><path d="M4 1h8l-2.800 2.800l3 3l-2.400 2.400l-3-3l-2.800 2.800zM24 1h-8l2.800 2.800l-3 3l2.400 2.400l3-3l2.800 2.800zM24 20h-8l2.800-2.800l-3-3l2.400-2.400l3 3l2.800-2.800z" fill="#5b8ac6" stroke="#3f6ea8" stroke-width="0.600"/></svg>
<svg class="ic" style="left:397px;top:70px" viewBox="0 0 24 24"><rect x="2.500" y="2.500" width="12" height="13.500" fill="#f7e04f" stroke="#d8b820"/><g opacity="1"><path d="M1.800 22.200L8.500 15.500" stroke="#b8901a" stroke-width="3.800"/><path d="M1.600 22.400L8.500 15.500" stroke="#f5c832" stroke-width="2.400"/><path d="M7 17L9.300 14.700" stroke="#222" stroke-width="3.600"/><circle cx="15.2" cy="8.6" r="8.2" fill="#ececec" stroke="#8e8e8e" stroke-width="1.200"/><path d="M15.200 1a7.600 7.600 0 0 0 0 15.200z" fill="#f1ead0"/><path d="M15.200 1.200v14.800" stroke="#cfc9b0" stroke-width="0.800"/><circle cx="15.2" cy="8.6" r="7.1" fill="none" stroke="#fff" stroke-width="1"/></g></svg>
<svg class="ic" style="left:430px;top:70px" viewBox="0 0 24 24"><rect x="2.500" y="2.500" width="12" height="13.500" fill="#efefef" stroke="#8e8e8e"/><g opacity="1"><path d="M1.800 22.200L8.500 15.500" stroke="#b8901a" stroke-width="3.800"/><path d="M1.600 22.400L8.500 15.500" stroke="#f5c832" stroke-width="2.400"/><path d="M7 17L9.300 14.700" stroke="#222" stroke-width="3.600"/><circle cx="15.2" cy="8.6" r="8.2" fill="#ececec" stroke="#8e8e8e" stroke-width="1.200"/><path d="M15.200 1a7.600 7.600 0 0 0 0 15.200z" fill="#e4e4e4"/><path d="M15.200 1.200v14.800" stroke="#c4c4c4" stroke-width="0.800"/><circle cx="15.2" cy="8.6" r="7.1" fill="none" stroke="#fff" stroke-width="1"/></g></svg>
<svg class="ic" style="left:463px;top:70px" viewBox="0 0 24 24"><g opacity="0.420"><rect x="2.500" y="2.500" width="12" height="13.500" fill="#efefef" stroke="#8e8e8e"/><g opacity="1"><path d="M1.800 22.200L8.500 15.500" stroke="#bdb59a" stroke-width="3.800"/><path d="M1.600 22.400L8.500 15.500" stroke="#d8d0b8" stroke-width="2.400"/><path d="M7 17L9.300 14.700" stroke="#999" stroke-width="3.600"/><circle cx="15.2" cy="8.6" r="8.2" fill="#f4f4f4" stroke="#999" stroke-width="1.200"/><circle cx="15.2" cy="8.6" r="7.1" fill="none" stroke="#fff" stroke-width="1"/></g><text x="9.300" y="12" font-family="Liberation Sans,sans-serif" font-size="9.500" font-weight="bold" fill="#555">1:1</text></g></svg>
<svg class="ic" style="left:496px;top:70px" viewBox="0 0 24 24"><g opacity="1"><path d="M1.800 22.200L8.500 15.500" stroke="#b8901a" stroke-width="3.800"/><path d="M1.600 22.400L8.500 15.500" stroke="#f5c832" stroke-width="2.400"/><path d="M7 17L9.300 14.700" stroke="#222" stroke-width="3.600"/><circle cx="13.8" cy="9" r="7.8" fill="#f1f1f1" stroke="#8e8e8e" stroke-width="1.200"/><circle cx="13.8" cy="9" r="6.7" fill="none" stroke="#fff" stroke-width="1"/></g><rect x="12.500" y="12.500" width="11" height="11" fill="#4f7fc0" stroke="#2e5f9f"/><path d="M21 14.800l-5.500 3.200l5.500 3.200" fill="none" stroke="#fff" stroke-width="1.800"/></svg>
<svg class="ic" style="left:529px;top:70px" viewBox="0 0 24 24"><g opacity="0.400"><g opacity="1"><path d="M1.800 22.200L8.500 15.500" stroke="#bdb59a" stroke-width="3.800"/><path d="M1.600 22.400L8.500 15.500" stroke="#d8d0b8" stroke-width="2.400"/><path d="M7 17L9.300 14.700" stroke="#999" stroke-width="3.600"/><circle cx="13.8" cy="9" r="7.8" fill="#f1f1f1" stroke="#999" stroke-width="1.200"/><circle cx="13.8" cy="9" r="6.7" fill="none" stroke="#fff" stroke-width="1"/></g><rect x="12.500" y="12.500" width="11" height="11" fill="#9a9a9a" stroke="#777"/><path d="M15 14.800l5.500 3.200l-5.500 3.200" fill="none" stroke="#fff" stroke-width="1.800"/></g></svg>
<svg class="ic" style="left:562px;top:70px" viewBox="0 0 24 24"><path d="M4.500 3q-3-0.500-3 1.500v15q0 2.500 3.500 2.500h16v-19z" fill="#e6e6e6" stroke="#7f7f7f"/><path d="M4.500 3v16q0 1-1.500 1" fill="none" stroke="#7f7f7f"/><rect x="13" y="13" width="11" height="11" rx="1.800" fill="#c9a70e"/><path d="M18.500 14.300v8.400M14.300 18.500h8.400M15.500 15.500l6 6M21.500 15.500l-6 6" stroke="#fff" stroke-width="1.300" fill="none"/><circle cx="18.500" cy="18.500" r="2.300" fill="#fff"/><circle cx="18.500" cy="18.500" r="1" fill="#c9a70e"/></svg>
<svg class="ic" style="left:595px;top:70px" viewBox="0 0 24 24"><path d="M7.500 1.500h9.500v21h-3.500l-6-6.500z" fill="#5b8ac6" stroke="#2e5f9f"/><rect x="13" y="13" width="11" height="11" rx="1.800" fill="#c9a70e"/><path d="M18.500 14.300v8.400M14.300 18.500h8.400M15.500 15.500l6 6M21.500 15.500l-6 6" stroke="#fff" stroke-width="1.300" fill="none"/><circle cx="18.500" cy="18.500" r="2.300" fill="#fff"/><circle cx="18.500" cy="18.500" r="1" fill="#c9a70e"/></svg>
<svg class="ic" style="left:628px;top:70px" viewBox="0 0 24 24"><path d="M4.500 3q-3-0.500-3 1.500v15q0 2.500 3.500 2.500h16v-19z" fill="#e6e6e6" stroke="#7f7f7f"/><path d="M4.500 3v16q0 1-1.500 1" fill="none" stroke="#7f7f7f"/><path d="M12.500 2.500h5v9l-2.500-2.500l-2.500 2.500z" fill="#4f84c8" stroke="#2e5f9f"/></svg>
<svg class="ic" style="left:661px;top:70px" viewBox="0 0 24 24"><path d="M1.800 10.500C2 4.500 6 0.800 10.500 0.800C14 0.800 17 2.200 19 4.500L22 2V11.700H13.200L15.800 8.500C14 6.500 12.500 5.500 10.500 5.500C6.500 5.500 3.500 7.500 2.800 10.500Z" fill="#6a9bd8" stroke="#3f74ba" stroke-width="0.500"/><path d="M1.800 10.500C2 4.500 6 0.800 10.500 0.800C14 0.800 17 2.200 19 4.500L22 2V11.700H13.200L15.800 8.500C14 6.500 12.500 5.500 10.500 5.500C6.500 5.500 3.500 7.500 2.800 10.500Z" fill="#3f76c0" stroke="#2e62a8" stroke-width="0.500" transform="rotate(180 12 12)"/></svg>
<div class="grip" style="left:699px;top:74px"></div>
<svg class="ic" style="left:709px;top:70px" viewBox="0 0 24 24"><circle cx="9" cy="9" r="7.500" fill="#5d8bc8" stroke="#3f6eaa"/><text x="6.300" y="14" font-family="Liberation Serif,serif" font-size="14" font-style="italic" font-weight="bold" fill="#fff">i</text><path d="M12.500 10.500v12l3-2.800l2.200 4.800l2-0.900l-2.200-4.800l4.200-0.300z" fill="#fff" stroke="#333" stroke-width="1" stroke-linejoin="round" transform="rotate(-14 12.500 10.500)"/></svg>
<svg class="ic" style="left:745px;top:70px" viewBox="0 0 24 24"><g opacity="0.320"><path d="M9.500 1l1.500 2.500l2.800-0.800l0.500 2.900l2.900 0.500l-0.800 2.800l2.500 1.500l-2.500 1.500l0.800 2.800l-2.900 0.500l-0.500 2.900l-2.800-0.800l-1.500 2.500l-1.500-2.500l-2.800 0.800l-0.500-2.900l-2.900-0.500l0.800-2.800l-2.500-1.500l2.500-1.500l-0.800-2.800l2.900-0.500l0.500-2.900l2.800 0.800z" fill="#dcdcdc" stroke="#777"/><circle cx="9.500" cy="10.500" r="4.500" fill="#f4f4f4" stroke="#777"/><path d="M8 8l4 2.500l-4 2.500z" fill="#777"/><path d="M12.500 10.500v12l3-2.800l2.200 4.800l2-0.900l-2.200-4.800l4.200-0.300z" fill="#fff" stroke="#333" stroke-width="1" stroke-linejoin="round" transform="rotate(-14 12.500 10.500)"/></g></svg>
<svg class="a" style="left:774px;top:81px" width="7" height="4" viewBox="0 0 7 4"><path d="M0 0h7l-3.500 4z" fill="#9a9a9a"/></svg>
<svg class="ic" style="left:788px;top:70px" viewBox="0 0 24 24"><rect x="1.500" y="1.500" width="20" height="17" fill="#ddd" stroke="#222" stroke-dasharray="2 1.500"/><rect x="2.500" y="2.500" width="11" height="12" fill="#f7dc45" stroke="#c9a400"/><path d="M12.500 10.500v12l3-2.800l2.200 4.800l2-0.900l-2.200-4.800l4.200-0.300z" fill="#fff" stroke="#333" stroke-width="1" stroke-linejoin="round" transform="rotate(-14 12.500 10.500)"/></svg>
<svg class="a" style="left:818px;top:81px" width="7" height="4" viewBox="0 0 7 4"><path d="M0 0h7l-3.500 4z" fill="#4d4d4d"/></svg>
<svg class="ic" style="left:834px;top:70px" viewBox="0 0 24 24"><rect x="5.500" y="8.500" width="15" height="12.500" fill="#f7dc45" stroke="#c9a400"/><rect x="2.500" y="3.500" width="14" height="12.500" fill="#d9d9d9" stroke="#7a7a7a"/><rect x="4.500" y="5.500" width="10" height="3" fill="#fafafa" stroke="#8a8a8a" stroke-width="0.800"/><rect x="4.500" y="10.500" width="10" height="3" fill="#fafafa" stroke="#8a8a8a" stroke-width="0.800"/></svg>
<svg class="a" style="left:864px;top:81px" width="7" height="4" viewBox="0 0 7 4"><path d="M0 0h7l-3.500 4z" fill="#4d4d4d"/></svg>
<svg class="ic" style="left:878px;top:70px" viewBox="0 0 24 24"><rect x="2.500" y="2.500" width="13" height="13" fill="#f7dc45" stroke="#c9a400"/><rect x="13" y="13" width="10" height="10" rx="2" fill="#d9363a" stroke="#a31d21"/><circle cx="18" cy="18" r="3" fill="none" stroke="#fff" stroke-width="1.300"/><path d="M16 20l4-4" stroke="#fff" stroke-width="1.300"/></svg>
<svg class="ic" style="left:911px;top:70px" viewBox="0 0 24 24"><rect x="2.500" y="2.500" width="19" height="19" rx="1" fill="#eeeeee" stroke="#6d97d4" stroke-width="1.200"/><rect x="2.900" y="2.900" width="18.200" height="4.200" fill="#b9d2ef"/><path d="M2.200 7.200h19.600" stroke="#6d97d4" stroke-width="1"/><path d="M5 4.900h4.100M10.900 4.900h7.800" stroke="#4f7fc0" stroke-width="1.500"/><path d="M5 9.600h4.100M10.900 9.600h7.800M5 12.600h4.100M10.900 12.600h7.800M5 15.500h4.100M10.900 15.500h7.800M5 18.500h4.100M10.900 18.500h7.800" stroke="#5b8ac6" stroke-width="1.300"/></svg>
<svg class="ic" style="left:944px;top:70px" viewBox="0 0 24 24"><path d="M2.600 2.200v18.500M21.300 2.200v18.500M2.600 4.400h18.700M2.600 10.400h18.700M2.600 16.300h18.700" stroke="#5a5a5a" stroke-width="1.100" fill="none"/><rect x="1.200" y="20.500" width="21.400" height="2.200" rx="0.800" fill="#e0e0e0" stroke="#5a5a5a" stroke-width="0.900"/><g stroke-width="0.800"><circle cx="9.200" cy="4.400" r="2.200" fill="#f6cccc" stroke="#c9363a"/><circle cx="17.300" cy="4.400" r="2.200" fill="#f6cccc" stroke="#c9363a"/><circle cx="7.400" cy="10.400" r="2.200" fill="#cdeacd" stroke="#5aa85a"/><circle cx="12.600" cy="10.400" r="2.200" fill="#cdeacd" stroke="#5aa85a"/><circle cx="7.400" cy="16.300" r="2.200" fill="#cfe2f6" stroke="#5b8ac6"/><circle cx="12.400" cy="16.300" r="2.200" fill="#cfe2f6" stroke="#5b8ac6"/><circle cx="17.400" cy="16.300" r="2.200" fill="#cfe2f6" stroke="#5b8ac6"/></g></svg>
<svg class="a" style="left:982px;top:80px" width="9" height="7" viewBox="0 0 9 7" fill="none" stroke="#111" stroke-width="1.500"><path d="M0.700 0.500l2.800 3l-2.800 3M4.700 0.500l2.800 3l-2.800 3"/></svg>
<div class="grip" style="left:6px;top:113px"></div>
<svg class="ic" style="left:18px;top:109px" viewBox="0 0 24 24"><path d="M0.300 9l7.500-3l5 12l-7 3.800z" fill="#d9643a" stroke="#b04a25" stroke-width="0.700"/><path d="M4 4.200l8-1.200l1.500 14l-8 1.500z" fill="#f3c83c" stroke="#c9a21c" stroke-width="0.700"/><path d="M10.600 0.400l13 3.100l-3 12.100l-13.100-2z" fill="#6f9bd1" stroke="#3a5f95" stroke-width="0.800"/><rect x="15" y="15" width="9" height="9" rx="1.800" fill="#5a9a5f" stroke="#4a8750" stroke-width="0.500"/><path d="M19.500 16.700v5.600M16.700 19.500h5.600" stroke="#fff" stroke-width="1.900"/></svg>
<svg class="ic" style="left:51px;top:109px" viewBox="0 0 24 24"><path d="M0.200 7.200l10.800-4.200l12.700 4.500l-11 5.600z" fill="#e9cf4a" stroke="#5a4a05" stroke-width="0.700"/><circle cx="12.200" cy="5.800" r="6.300" fill="#a5c4e6" stroke="#6a90c2" stroke-width="0.700"/><path d="M7 4q1.500-2.500 4.500-3l1 1.500l-1.500 1l0.500 2l-2 1l-0.500 2.500l-1.500-1.500zM13 4.500l2-2.500l2.500 1.500l0.800 3l-1.800 3l-1.500-1l0.500-2z" fill="#3b6396" opacity="0.900"/><path d="M0.200 7.200l12.500 5.900v10.200l-12.500-6.700z" fill="#d8ad0c" stroke="#5a4a05" stroke-width="0.700"/><path d="M12.700 13.100l11-5.600v9.600l-11 6.200z" fill="#f4dc5a" stroke="#5a4a05" stroke-width="0.700"/><rect x="14.200" y="14.800" width="9.300" height="9.200" rx="1.200" fill="#c9a70e"/><path d="M18.850 16v6.800M15.900 17.700l5.900 3.400M21.800 17.700l-5.900 3.400" stroke="#fff" stroke-width="1.500" fill="none"/></svg>
<svg class="ic" style="left:84px;top:109px" viewBox="0 0 24 24"><path d="M2.200 2.400l6.200 14.800l7.100-14.800h6.600" fill="none" stroke="#2f3f55" stroke-width="1.300"/><g fill="#fff" stroke="#2f3f55" stroke-width="1"><circle cx="2.200" cy="2.600" r="1.600"/><circle cx="8.400" cy="17.200" r="1.600"/><circle cx="15.500" cy="2.600" r="1.600"/><circle cx="21.800" cy="2.600" r="1.600"/></g><rect x="14.200" y="14.800" width="9.300" height="9.200" rx="1.200" fill="#c9a70e"/><path d="M18.850 16v6.800M15.900 17.700l5.900 3.400M21.800 17.700l-5.900 3.400" stroke="#fff" stroke-width="1.500" fill="none"/></svg>
<svg class="ic" style="left:117px;top:109px" viewBox="0 0 24 24"><path d="M0.500 23.100C3 14 8 6 16 2.500L22.600 0L23 5C19 11 13 16 5 20.500Z" fill="#8fb0dc" stroke="#3f6799" stroke-width="0.900"/><path d="M0.500 23.100C6 14 13 7 22 1M7 14l6-1M11 9.500l6-1.500M5 18l5-1.500" fill="none" stroke="#3f6799" stroke-width="0.700"/><rect x="14.200" y="14.800" width="9.300" height="9.200" rx="1.200" fill="#c9a70e"/><path d="M18.850 16v6.800M15.900 17.700l5.900 3.400M21.800 17.700l-5.900 3.400" stroke="#fff" stroke-width="1.500" fill="none"/></svg>
<svg class="ic" style="left:150px;top:109px" viewBox="0 0 24 24"><rect x="3.200" y="6.500" width="18.500" height="9.600" rx="1.200" fill="#6f98cc" stroke="#2f5488"/><path d="M6.400 2.200v4.300M9.400 2.200v4.300M12.400 2.200v4.300M15.400 2.200v4.300M18.400 2.200v4.300M6.400 16.100v4M9.400 16.100v4M12.400 16.100v4" stroke="#2f5488" stroke-width="1.300"/><rect x="14.200" y="14.800" width="9.300" height="9.200" rx="1.200" fill="#c9a70e"/><path d="M18.850 16v6.800M15.900 17.700l5.900 3.400M21.800 17.700l-5.900 3.400" stroke="#fff" stroke-width="1.500" fill="none"/></svg>
<div class="a" style="left:182px;top:111px;width:1px;height:20px;background:#cdcdcd"></div>
<div class="a" style="left:190px;top:109px;width:23px;height:24px;background:linear-gradient(#bccee8,#9fb8dc);border:1px solid #5b7fb5;border-radius:3px"></div>
<svg class="ic" style="left:189px;top:109px" viewBox="0 0 24 24"><path d="M3.500 3l3.800 14.500l7.200-14.500h6.500" fill="none" stroke="#2f3f55" stroke-width="1.300"/><g fill="#fff" stroke="#2f3f55" stroke-width="0.900"><circle cx="3.500" cy="3.200" r="1.600"/><circle cx="7.300" cy="17.500" r="1.600"/><circle cx="14.500" cy="3.200" r="1.600"/><circle cx="20.800" cy="3.200" r="1.600"/></g><rect x="14.200" y="14.800" width="9.300" height="9.200" rx="1.200" fill="#c9a70e"/><path d="M18.850 16v6.800M15.900 17.700l5.900 3.400M21.800 17.700l-5.900 3.400" stroke="#fff" stroke-width="1.500" fill="none"/></svg>
<div class="grip" style="left:226px;top:113px"></div>
<svg class="ic" style="left:238px;top:109px" viewBox="0 0 24 24"><g opacity="0.350"><path d="M9 2l4 1.500l-6 16l-4.500 2.500l0.500-5z" fill="#c9c4b8" stroke="#888"/><path d="M15 2l4 1.500l-6 16l-4.500 2.500l0.500-5z" fill="#d8d3c8" stroke="#888"/></g></svg>
<svg class="a" style="left:260px;top:129px" width="5" height="3" viewBox="0 0 7 4"><path d="M0 0h7l-3.500 4z" fill="#8a8a8a"/></svg>
<svg class="ic" style="left:271px;top:109px" viewBox="0 0 24 24"><path d="M14.500 1.500l5 2.500l-9 15.500l-6 3.500l1-7z" fill="#f1d33f" stroke="#8f7a14" stroke-linejoin="round"/><path d="M5.500 16l5 3.500l-6 3.500z" fill="#e9dcc0" stroke="#777" stroke-linejoin="round"/><path d="M4.500 23l0.500-3l2 1.500z" fill="#222"/><path d="M12 7l4 2.500M16.500 3l-9.500 15" stroke="#b89a1c" fill="none"/></svg>
<svg class="ic" style="left:304px;top:109px" viewBox="0 0 24 24"><g opacity="0.380"><rect x="2.500" y="1.500" width="18" height="18" rx="2" fill="#c4c4c4" stroke="#888"/><rect x="5.500" y="2.500" width="12" height="8" fill="#f4f4f4"/><path d="M7 5h9M7 7.500h9" stroke="#999"/><rect x="6.500" y="13" width="10" height="6" fill="#e4e4e4"/><rect x="8" y="14" width="2.500" height="4" fill="#999"/><path d="M20 9l2.500 1.500l-6 10l-3.500 2l0.500-4z" fill="#d6c9c4" stroke="#988"/></g></svg>
<svg class="ic" style="left:337px;top:109px" viewBox="0 0 24 24"><g opacity="0.450"><path d="M3 6q1-4 6-3.500q4 1.500 8 0q5 0 5 4q0 4-4 5q-3 0.500-4 2.500t-6 1q-5-1-5-5z" fill="#c9cdc9" stroke="#999"/><rect x="13" y="13" width="10.500" height="10.500" rx="1" fill="#b9b4a4"/><path d="M18.250 14.500v7.500M15 16.400l6.500 3.700M21.500 16.400l-6.500 3.700" stroke="#fff" stroke-width="1.500" fill="none"/></g></svg>
<svg class="ic" style="left:370px;top:109px" viewBox="0 0 24 24"><g opacity="0.420"><path d="M2 22l4-17.500h10" fill="none" stroke="#777" stroke-width="1.200"/><rect x="3.500" y="2" width="5" height="5" fill="#eee" stroke="#777"/><circle cx="6" cy="4.500" r="1" fill="#a55"/><path d="M8 12l10 9.500" stroke="#8a8370" stroke-width="3"/><path d="M8 16q3-6 10-5l-1 3q-4-0.500-6 3z" fill="#9a937f" stroke="#777" stroke-width="0.600"/></g></svg>
<svg class="a" style="left:402px;top:119px" width="7" height="4" viewBox="0 0 7 4"><path d="M0 0h7l-3.500 4z" fill="#9a9a9a"/></svg>
<svg class="ic" style="left:416px;top:109px" viewBox="0 0 24 24"><g opacity="0.420"><rect x="1.500" y="3.500" width="19" height="5" fill="#d6d3bf" stroke="#9a987f"/><rect x="1.500" y="10.500" width="19" height="5" fill="#d6d3bf" stroke="#9a987f"/><rect x="1.500" y="17.500" width="19" height="5" fill="#d6d3bf" stroke="#9a987f"/><path d="M18 1.500l3.500 2l-9 15.500l-4.500 3l0.500-5.500z" fill="#ddd" stroke="#888"/></g></svg>
<svg class="ic" style="left:449px;top:109px" viewBox="0 0 24 24"><g opacity="0.400"><path d="M3.500 7.500h17l-1.500 15h-14z" fill="#d9cccc" stroke="#a08a8a"/><rect x="1.500" y="3.500" width="21" height="4" fill="#d9cccc" stroke="#a08a8a"/><path d="M8.500 3.500v-2h7v2" fill="none" stroke="#a08a8a"/><path d="M8 10.500v9M12 10.500v9M16 10.500v9" stroke="#a08a8a" stroke-width="1.500"/></g></svg>
<svg class="ic" style="left:482px;top:109px" viewBox="0 0 24 24"><g opacity="0.400" fill="none" stroke="#8a8a8a" stroke-width="1.300"><path d="M1.500 5.500l14 8.500M1.500 11l14-5" /><ellipse cx="18.500" cy="16.500" rx="3.500" ry="2.500" transform="rotate(35 18.500 16.500)"/><ellipse cx="18.500" cy="5.500" rx="3.500" ry="2.500" transform="rotate(-25 18.500 5.500)"/></g></svg>
<svg class="ic" style="left:515px;top:109px" viewBox="0 0 24 24"><g opacity="0.400" stroke="#8a8a8a" fill="#f2f2f2"><path d="M8.500 2.500h7l4 4v12.500h-11z"/><path d="M3.500 7.500h7l4 4v11h-11z"/><path d="M5.500 13.500h6M5.500 16h6M5.500 18.500h6" fill="none"/></g></svg>
<svg class="ic" style="left:548px;top:109px" viewBox="0 0 24 24"><g opacity="0.400" stroke="#8a8a8a" fill="#e6e6e6"><rect x="3.500" y="3.500" width="17" height="19" rx="1"/><rect x="8" y="1.500" width="8" height="4" fill="#ccc"/><path d="M6.500 7.500h8l3 3v9.500h-11z" fill="#fafafa"/><path d="M8.500 13h6M8.500 15.500h6M8.500 18h6" fill="none"/></g></svg>
<svg class="ic" style="left:581px;top:109px" viewBox="0 0 24 24"><g opacity="0.450"><path d="M2.500 9l7.500-6.500v4q10 0 10 7.500q0 6-6 7.500v-3.500q2.500-1 2.500-3.500q0-3.500-6.500-3.500v4.500z" fill="#c4bcb8" stroke="#a09894"/></g></svg>
<svg class="ic" style="left:614px;top:109px" viewBox="0 0 24 24"><g opacity="0.450" transform="translate(24 0) scale(-1 1)"><path d="M2.500 9l7.500-6.500v4q10 0 10 7.500q0 6-6 7.500v-3.500q2.500-1 2.500-3.500q0-3.500-6.500-3.500v4.500z" fill="#c8c8c8" stroke="#a0a0a0"/></g></svg>
<div class="grip" style="left:651px;top:113px"></div>
<svg class="ic" style="left:662px;top:108px" viewBox="0 0 24 24"><path d="M1.500 10.500l4.500-5h16v10h-16z" fill="#f3d63c" stroke="#b8960a" stroke-linejoin="round"/><text x="6.500" y="14" font-family="Liberation Sans,sans-serif" font-size="8.500" font-weight="bold" fill="#222">abc</text></svg>
<svg class="ic" style="left:696px;top:109px" viewBox="0 0 24 24"><circle cx="9" cy="9" r="6.800" fill="#3f9a3f" stroke="#2a2a2a" stroke-width="0.800"/><path d="M9 9l-1-6.700a6.800 6.800 0 0 1 7.500 9.200z" fill="#d42a2e" stroke="#2a2a2a" stroke-width="0.700"/><path d="M9 9l-1-6.700a6.800 6.800 0 0 0-5.200 3.500z" fill="#f3d63c" stroke="#2a2a2a" stroke-width="0.700"/><rect x="10.500" y="16" width="3.800" height="6.500" fill="#f3d63c" stroke="#c49a10" stroke-width="0.800"/><rect x="14.300" y="10.500" width="3.800" height="12" fill="#3f9a3f" stroke="#2b6a2b" stroke-width="0.800"/><rect x="18.100" y="17" width="3.400" height="5.500" fill="#d42a2e" stroke="#911" stroke-width="0.800"/></svg>
<div class="a" style="left:728px;top:111px;width:1px;height:20px;background:#cdcdcd"></div>
<svg class="ic" style="left:736px;top:110px" viewBox="0 0 24 24"><path d="M1.500 8l4-4.500h15v9h-15z" fill="#eef3fa" stroke="#6f9fdc" stroke-linejoin="round"/><text x="6.300" y="11.300" font-family="Liberation Sans,sans-serif" font-size="8.500" font-weight="bold" fill="#333">ab</text><path d="M17.500 6.500v8" stroke="#999" stroke-width="1.800"/><circle cx="18.800" cy="17" r="4.600" fill="#a51e23" stroke="#7d1015" stroke-width="0.600"/><circle cx="17.500" cy="15.500" r="1.300" fill="#c9666a"/></svg>
<svg class="ic" style="left:769px;top:109px" viewBox="0 0 24 24"><path d="M1.500 9.500l4.500-5h16v10h-16z" fill="#fdeeee" stroke="#d9363a" stroke-width="1.400" stroke-linejoin="round"/><text x="6.500" y="13" font-family="Liberation Sans,sans-serif" font-size="8.500" font-weight="bold" fill="#d9262a">abc</text></svg>
<div class="a" style="left:801px;top:111px;width:1px;height:20px;background:#cdcdcd"></div>
<svg class="a" style="left:818px;top:118px" width="9" height="7" viewBox="0 0 9 7" fill="none" stroke="#111" stroke-width="1.500"><path d="M0.700 0.500l2.800 3l-2.800 3M4.700 0.500l2.800 3l-2.800 3"/></svg>
<div class="grip" style="left:836px;top:113px"></div>
<svg class="ic" style="left:848px;top:109px" viewBox="0 0 24 24"><circle cx="12" cy="10.500" r="10.300" fill="#587fbd" stroke="#2a4270" stroke-width="0.900"/><path d="M1.800 10.500h20.400M12 0.300v20M4.500 4.500q7.500 4 15 0M4.500 16.500q7.500-4 15 0M12 0.300q-8 10 0 20M12 0.300q8 10 0 20" fill="none" stroke="#d5dff0" stroke-width="0.800"/><path d="M5 5q3-2 5 0l1 3l-3 2.500l-3-1zM14 4l4 1l1.500 4l-3 1.500l-2.500-2.500z" fill="#c3cfe4" opacity="0.800"/><path d="M7.800 13h3.200l0.700 2.500h0.600l0.700-2.500h3.200l4.300 6.500a3.600 3.600 0 0 1-6.800 2.300l-0.500-2h-2.400l-0.500 2a3.600 3.600 0 0 1-6.800-2.300z" fill="#0c0c0c"/></svg>
<div class="grip" style="left:885px;top:113px"></div>
<svg class="ic" style="left:897px;top:109px" viewBox="0 0 24 24"><path d="M11.800 1.500q-5 0-5 3v3h5.500v1h-8q-3 0-3 4.500t3 4.500h2.500v-3q0-3 3-3h5q2.500 0 2.500-2.500v-4.500q0-3-5.500-3z" fill="#3f7cb8"/><circle cx="9" cy="4" r="1" fill="#fff"/><path d="M12.200 22.500q5 0 5-3v-3h-5.500v-1h8q3 0 3-4.500t-3-4.500h-2.500v3q0 3-3 3h-5q-2.500 0-2.500 2.500v4.500q0 3 5.500 3z" fill="#f3cf3e"/><circle cx="15" cy="20" r="1" fill="#fff"/><path d="M17.500 18.500l5 2.500l-5 2.500" fill="none" stroke="#333" stroke-width="1.200"/></svg>
<div class="grip" style="left:934px;top:113px"></div>
<svg class="ic" style="left:946px;top:109px" viewBox="0 0 24 24"><rect x="2.500" y="1.500" width="19.500" height="21" rx="1" fill="#4a6a9e" stroke="#2a3a58"/><rect x="2.500" y="1.500" width="4" height="21" fill="#28344a"/><text x="10" y="17.500" font-family="Liberation Sans,sans-serif" font-size="15" fill="#fff">?</text></svg>
<div class="grip" style="left:983px;top:113px"></div>
<div class="grip" style="left:6px;top:152px"></div>
<svg class="ic" style="left:18px;top:148px" viewBox="0 0 24 24"><g transform="translate(13.300 13.800) rotate(-45)"><path d="M-8-7v6a8 8 0 0 0 16 0v-6h-5v6a3 3 0 0 1-6 0v-6z" fill="#d10000" stroke="#a00000" stroke-width="0.600"/><rect x="-7.500" y="-6.500" width="4" height="3" fill="#eeeeee" stroke="#8e0b10" stroke-width="0.800"/><rect x="3.500" y="-6.500" width="4" height="3" fill="#eeeeee" stroke="#8e0b10" stroke-width="0.800"/></g></svg>
<svg class="ic" style="left:51px;top:148px" viewBox="0 0 24 24"><g opacity="0.350" stroke="#888" fill="#eee"><path d="M11 21v-9l-6-7M11 12l6-5M11 16l6 0" fill="none" stroke-dasharray="2 1"/><rect x="3" y="2" width="4" height="4"/><rect x="15" y="4" width="4" height="4"/><rect x="15" y="12" width="4" height="4"/></g></svg>
<svg class="a" style="left:71px;top:168px" width="5" height="3" viewBox="0 0 7 4"><path d="M0 0h7l-3.500 4z" fill="#8a8a8a"/></svg>
<svg class="ic" style="left:84px;top:148px" viewBox="0 0 24 24"><g opacity="0.350" stroke="#999" fill="#eee"><rect x="4" y="4" width="3.500" height="3.500"/><rect x="16" y="7" width="3.500" height="3.500"/><rect x="10" y="17" width="3.500" height="3.500"/></g></svg>
<svg class="a" style="left:104px;top:168px" width="5" height="3" viewBox="0 0 7 4"><path d="M0 0h7l-3.500 4z" fill="#8a8a8a"/></svg>
<div class="a" style="left:113px;top:149px;width:100px;height:24px;background:#f0f0f0;border:1px solid #b4b4b4;border-radius:2px"></div>
<div class="a" style="left:197px;top:150px;width:15px;height:22px;background:#fafafa;border-left:1px solid #d0d0d0"></div>
<svg class="a" style="left:202px;top:154px" width="7" height="13" viewBox="0 0 7 13"><path d="M0 4.500L3.500 0.500L7 4.500z M0 8.500L3.500 12.500L7 8.500z" fill="#9a9a9a"/></svg>
<div class="t" style="left:119px;top:150px;color:#8a8a8a">12</div>
<div class="a" style="left:215px;top:149px;width:87px;height:24px;background:#f6f6f6;border:1px solid #b4b4b4;border-radius:2px"></div>
<div class="t" style="left:219px;top:150px;color:#8a8a8a">px</div>
<svg class="a" style="left:288px;top:159px" width="7" height="4" viewBox="0 0 7 4"><path d="M0 0h7l-3.500 4z" fill="#9a9a9a"/></svg>
<svg class="ic" style="left:305px;top:147px" viewBox="0 0 24 24"><path d="M11.500 23v-11l-7-9.500M11.500 12l11-4" fill="none" stroke="#5aad5a" stroke-width="1.800"/><rect x="9.500" y="10" width="4" height="4" fill="#bbb" stroke="#555"/></svg>
<svg class="ic" style="left:339px;top:148px" viewBox="0 0 24 24"><g opacity="0.350" stroke="#9a9a9a" stroke-width="1.600"><path d="M2 2l20 20M22 2l-20 20"/><rect x="10" y="10" width="4" height="4" fill="#eee" stroke-width="1"/></g></svg>
<svg class="ic" style="left:372px;top:148px" viewBox="0 0 24 24"><g opacity="0.450"><path d="M2 22l20-20" stroke="#aaa" stroke-width="1.600"/><path d="M6 4l6 6.500l8-5.500l-4 7l4 8l-8-5l-6 4l3-7z" fill="#c9c5b4" stroke="#aaa" stroke-width="0.600"/></g></svg>
<svg class="a" style="left:404px;top:158px" width="7" height="4" viewBox="0 0 7 4"><path d="M0 0h7l-3.500 4z" fill="#9a9a9a"/></svg>
<svg class="ic16" style="left:9px;top:206px" viewBox="0 0 16 16"><rect x="1.500" y="1.500" width="11" height="11" fill="#ececec" stroke="#7a7a7a"/><rect x="9" y="9" width="6" height="6" rx="1.500" fill="#4d9a55"/><circle cx="12" cy="12" r="1.600" fill="#cfe6cf"/></svg>
<svg class="ic16" style="left:34px;top:206px" viewBox="0 0 16 16"><g transform="scale(0.667)"><path d="M1.800 10.500C2 4.500 6 0.800 10.500 0.800C14 0.800 17 2.200 19 4.500L22 2V11.700H13.200L15.800 8.500C14 6.500 12.500 5.500 10.500 5.500C6.500 5.500 3.500 7.500 2.800 10.500Z" fill="#6a9bd8" stroke="#3f74ba" stroke-width="0.500"/><path d="M1.800 10.500C2 4.500 6 0.800 10.500 0.800C14 0.800 17 2.200 19 4.500L22 2V11.700H13.200L15.800 8.500C14 6.500 12.500 5.500 10.500 5.500C6.500 5.500 3.500 7.500 2.800 10.500Z" fill="#3f76c0" stroke="#2e62a8" stroke-width="0.500" transform="rotate(180 12 12)"/></g></svg>
<svg class="ic16" style="left:59px;top:206px" viewBox="0 0 16 16"><path d="M1 0.800h14v2l-5.200 5.500v7.200l-3.600-1.500v-5.700l-5.200-5.500z" fill="#6f9bd1" stroke="#3f6eaa" stroke-width="0.800"/><rect x="1.800" y="1.300" width="12.400" height="1.600" fill="#f3dc3c"/></svg>
<svg class="ic16" style="left:84px;top:206px" viewBox="0 0 16 16"><path d="M0.500 2.500h14.500M2.500 2.500v11M2.500 6.500h2M2.500 12.500h2" stroke="#8a8a8a" stroke-width="1" fill="none"/><rect x="4" y="5" width="3" height="3" fill="#fff3d6" stroke="#f39c1f" stroke-width="0.900"/><rect x="4" y="11" width="3" height="3" fill="#fff3d6" stroke="#f39c1f" stroke-width="0.900"/><path d="M8.500 14.500h3.500v-7.500h3l-4.800-5.800l-4.700 5.800h3z" fill="#4a7ab8" stroke="#2e5f9f" stroke-width="0.700"/></svg>
<svg class="ic16" style="left:109px;top:206px" viewBox="0 0 16 16"><circle cx="8" cy="8" r="6.800" fill="#6b93cc" stroke="#5580bd"/><text x="6.200" y="12.500" font-family="Liberation Serif,serif" font-size="12" font-style="italic" font-weight="bold" fill="#fff">i</text></svg>
<svg class="ic16" style="left:9px;top:545px" viewBox="0 0 16 16"><path d="M3.500 3.200l7 2.300l-0.700 1.800l-7-2.300z" fill="#f0d63a"/><path d="M2.800 5l7 2.300l-0.800 1.700l-7-2.200z" fill="#5b8ac6"/><path d="M2 6.800l7 2.200l-1 2.500l-7-2.500z" fill="#d9363a"/><path d="M5.500 8.800l5-3l2 3.700l-4 4z" fill="#dcae6a" stroke="#b98a3a" stroke-width="0.600"/><path d="M10.800 6.300l4.200-3.700" stroke="#c9892e" stroke-width="1.900" stroke-linecap="round"/></svg>
<svg class="ic16" style="left:34px;top:545px" viewBox="0 0 16 16"><rect x="1.500" y="5.500" width="8" height="9" fill="none" stroke="#777"/><rect x="3.500" y="3.500" width="8" height="9" fill="#f0f0f0" stroke="#777"/><rect x="5.500" y="1.500" width="8" height="9" fill="#f0f0f0" stroke="#777"/><path d="M8.500 1v7a1.200 1.200 0 0 0 2.400 0v-7" fill="none" stroke="#4f7fc4" stroke-width="1.200"/><rect x="10" y="10" width="5.500" height="5.500" rx="1.500" fill="#4d9a55"/><circle cx="12.750" cy="12.750" r="1.500" fill="#cfe6cf"/></svg>
<svg class="ic16" style="left:60px;top:545px" viewBox="0 0 16 16"><path d="M0.500 8q7-8 14 0q-7 7-14 0z" fill="#f4f4f4" stroke="#888"/><circle cx="7.500" cy="7.500" r="3.300" fill="#5b8fd0"/><circle cx="7.500" cy="7.500" r="1.400" fill="#111"/><path d="M1 5q6-6 13 0" fill="none" stroke="#aaa"/><path d="M11.500 12.500h4.500l-2.250 2.800z" fill="#444"/></svg>
<svg class="ic16" style="left:84px;top:545px" viewBox="0 0 16 16"><path d="M1 0.800h14v2l-5.200 5.500v7.200l-3.600-1.500v-5.700l-5.200-5.500z" fill="#6f9bd1" stroke="#3f6eaa" stroke-width="0.800"/><rect x="1.800" y="1.300" width="12.400" height="1.600" fill="#f3dc3c"/></svg>
<svg class="ic16" style="left:109px;top:545px" viewBox="0 0 16 16"><text x="0" y="11" font-family="Liberation Serif,DejaVu Serif,serif" font-size="19" fill="#5e2d73">ε</text><path d="M8 9h7.500l-2.500 3v4h-2.500v-4z" fill="#bcbcbc" stroke="#999" stroke-width="0.600"/></svg>
<svg class="a" style="left:132px;top:551px" width="7" height="4" viewBox="0 0 7 4"><path d="M0 0h7l-3.500 4z" fill="#4d4d4d"/></svg>
<svg class="ic16" style="left:147px;top:545px" viewBox="0 0 16 16"><path d="M0.500 2.500h14.500M2.500 2.500v11M2.500 6.500h2M2.500 12.500h2" stroke="#8a8a8a" stroke-width="1" fill="none"/><rect x="4" y="5" width="3" height="3" fill="#fff3d6" stroke="#f39c1f" stroke-width="0.900"/><rect x="4" y="11" width="3" height="3" fill="#fff3d6" stroke="#f39c1f" stroke-width="0.900"/><path d="M8.500 1.500h3.500v7.500h3l-4.800 5.800l-4.700-5.800h3z" fill="#4a7ab8" stroke="#2e5f9f" stroke-width="0.700"/></svg>
<svg class="ic16" style="left:172px;top:545px" viewBox="0 0 16 16"><path d="M0.500 2.500h14.500M2.500 2.500v11M2.500 6.500h2M2.500 12.500h2" stroke="#8a8a8a" stroke-width="1" fill="none"/><rect x="4" y="5" width="3" height="3" fill="#fff3d6" stroke="#f39c1f" stroke-width="0.900"/><rect x="4" y="11" width="3" height="3" fill="#fff3d6" stroke="#f39c1f" stroke-width="0.900"/><path d="M8.500 14.500h3.500v-7.500h3l-4.800-5.800l-4.700 5.800h3z" fill="#4a7ab8" stroke="#2e5f9f" stroke-width="0.700"/></svg>
<svg class="ic16" style="left:196px;top:545px" viewBox="0 0 16 16"><rect x="1.500" y="1.500" width="11" height="11" fill="#f4f4f4" stroke="#7a7a7a"/><rect x="9" y="9.500" width="6.500" height="5" rx="1.500" fill="#d9363a"/><path d="M10.500 12h3.500" stroke="#fff" stroke-width="1.200"/></svg>
<svg class="ic16" style="left:394px;top:998px" viewBox="0 0 16 16"><path d="M2 4.500q2.500-3.500 6-1.500l4.500 5.500q2 3.500-1 5.500q-3.500 1.500-5.500-2l-4.500-5q-1-1.300 0.500-2.500z" fill="#e8e8e8" stroke="#222" stroke-width="1.300"/><path d="M3 7l4-4M5.500 9.500l4-4M4.500 5l3 3" stroke="#222" stroke-width="1"/><circle cx="9" cy="11" r="1.300" fill="#222"/><path d="M10.500 2l3.500-1.500M12 4.500l3.500-0.500" stroke="#333" stroke-width="0.900"/></svg>
<svg class="ic16" style="left:538px;top:998px" viewBox="0 0 16 16"><rect x="2.500" y="7" width="11" height="8" rx="1" fill="#7a7a7a"/><path d="M4.500 7v-2.500a3.500 3.500 0 0 1 7 0v2.500" fill="none" stroke="#7a7a7a" stroke-width="1.800"/></svg>
<svg class="ic16" style="left:844px;top:998px" viewBox="0 0 16 16"><circle cx="8" cy="7.300" r="6.700" fill="#f6f6f6" stroke="#555" stroke-width="1"/><ellipse cx="8" cy="7.300" rx="3" ry="6.700" fill="none" stroke="#555" stroke-width="0.800"/><path d="M1.300 7.300h13.400M8 0.600v13.400M2.300 4h11.400M2.300 10.600h11.400" stroke="#555" stroke-width="0.800" fill="none"/><path d="M6 13.500l2 2.500l2-2.500z" fill="#555"/></svg>
<svg class="ic16" style="left:949px;top:998px" viewBox="0 0 16 16"><path d="M8 0.500c4.800 0 8 2.800 8 6s-3.200 6-7 6l4 3.500l-6.500-3.500c-4 0-6.500-2.800-6.500-6s3.200-6 8-6z" fill="#6a6a6a"/><circle cx="4.300" cy="6.500" r="1.200" fill="#fff"/><circle cx="8" cy="6.500" r="1.200" fill="#fff"/><circle cx="11.700" cy="6.500" r="1.200" fill="#fff"/></svg>
</body></html>
